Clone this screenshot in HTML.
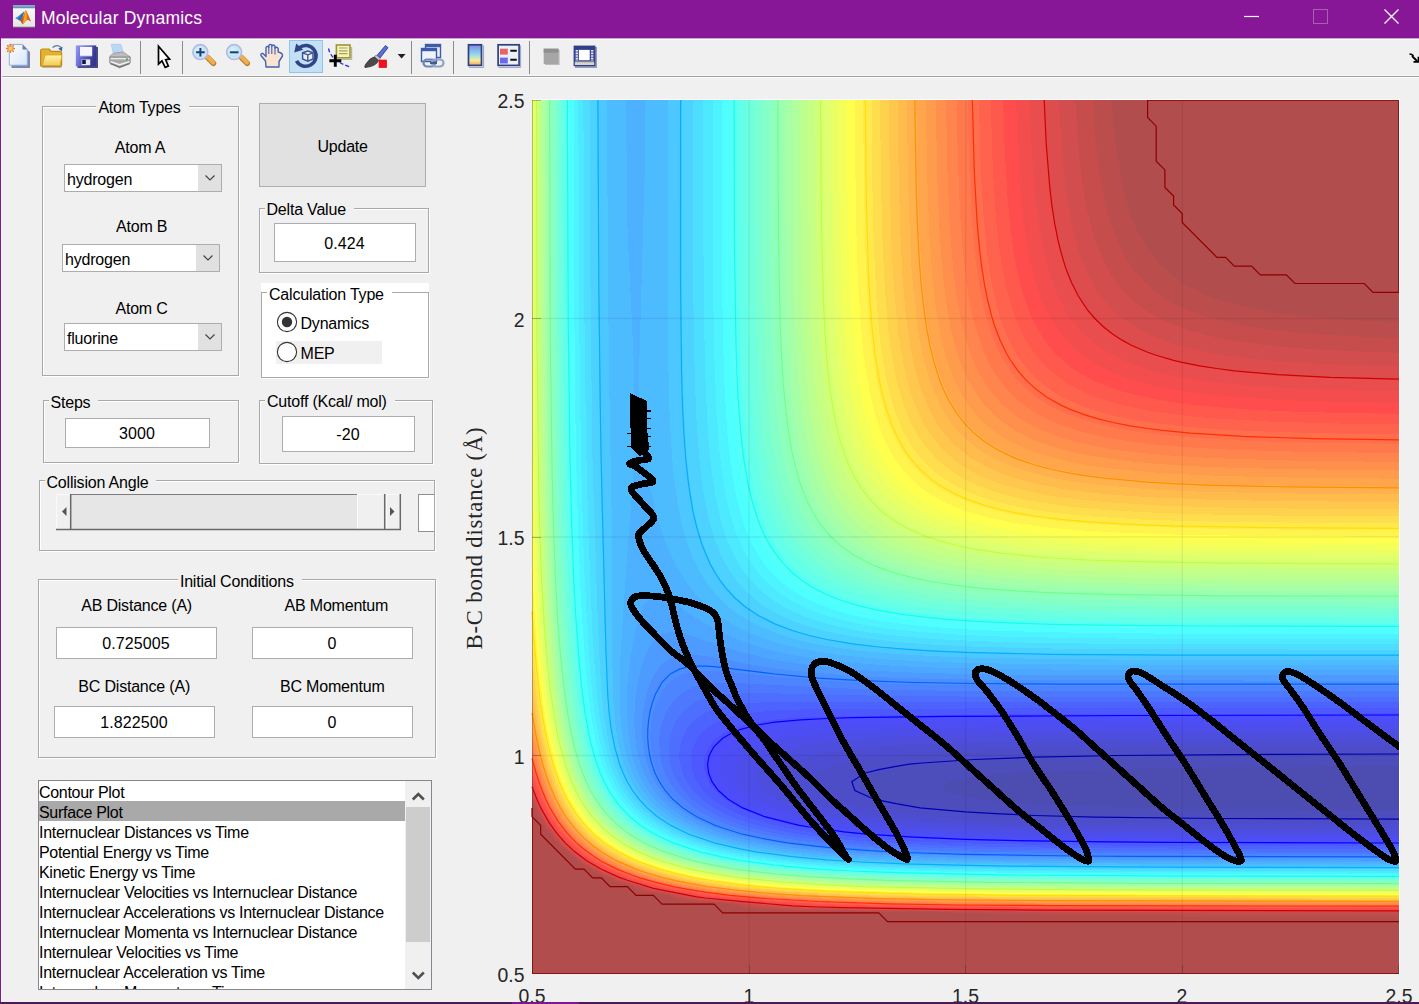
<!DOCTYPE html>
<html><head><meta charset="utf-8"><title>Molecular Dynamics</title>
<style>
html,body{margin:0;padding:0;}
body{width:1419px;height:1004px;overflow:hidden;background:#f0f0f0;font-family:"Liberation Sans",Arial,sans-serif;color:#000;position:relative;}
.abs{position:absolute;}
#titlebar{left:0;top:0;width:1419px;height:38px;background:#881798;border-bottom:1px solid #cfa2d6;}
#title{left:41px;top:8px;font-size:17.5px;letter-spacing:0.2px;line-height:20px;color:#fff;white-space:nowrap;}
#toolbar{left:1px;top:39px;width:1418px;height:37px;background:#f0f0f0;border-top:1px solid #fdfdfd;box-sizing:border-box;border-bottom:none;}#tbline{left:1px;top:75px;width:1418px;height:3px;background:#a0a0a0;border-top:1px solid #f7f7f7;border-bottom:1px solid #fff;box-sizing:border-box;}#leftw{left:1px;top:39px;width:1px;height:963px;background:#f8fcf8;}
#leftb{left:0;top:38px;width:1px;height:966px;background:#881798;}
#botb{left:0;top:1002px;width:1419px;height:2px;background:#4b1a55;}
.panel{border:1px solid #a9a9a9;box-shadow:1px 1px 0 #fff, inset 1px 1px 0 #fff;box-sizing:border-box;}
.ptitle{background:#f0f0f0;font-size:16px;letter-spacing:-0.2px;white-space:nowrap;padding:0 8px 0 2px;line-height:18px;}
.lbl{font-size:16px;letter-spacing:-0.2px;white-space:nowrap;line-height:18px;text-align:center;}
.edit{background:#fff;border:1px solid #abadb3;box-sizing:border-box;font-size:16px;text-align:center;}
.combo{background:#fff;border:1px solid #adadad;box-sizing:border-box;font-size:16px;}
.tick{font-size:17.5px;color:#262626;white-space:nowrap;line-height:18px;}
</style></head><body>
<div id="titlebar" class="abs"></div>
<div id="title" class="abs">Molecular Dynamics</div>
<div id="toolbar" class="abs"></div><div id="tbline" class="abs"></div>
<div id="leftw" class="abs"></div><div id="leftb" class="abs"></div>
<svg class="abs" style="left:0;top:0" width="1419" height="80" viewBox="0 0 1419 80">
<defs>
<linearGradient id="gpage" x1="0" y1="0" x2="1" y2="1"><stop offset="0" stop-color="#fff"/><stop offset="1" stop-color="#d6e4f7"/></linearGradient>
<linearGradient id="gfold" x1="0" y1="0" x2="0" y2="1"><stop offset="0" stop-color="#fff4a8"/><stop offset="1" stop-color="#f3cc55"/></linearGradient>
<linearGradient id="gsave" x1="0" y1="0" x2="1" y2="0.3"><stop offset="0" stop-color="#9a9cf4"/><stop offset="0.5" stop-color="#5a5cc8"/><stop offset="1" stop-color="#34368f"/></linearGradient>
<linearGradient id="gcb" x1="0" y1="0" x2="0" y2="1"><stop offset="0" stop-color="#7f86e6"/><stop offset="0.45" stop-color="#8fd8ee"/><stop offset="0.75" stop-color="#f4ee9a"/><stop offset="1" stop-color="#f2a65a"/></linearGradient>
<radialGradient id="gglass" cx="0.4" cy="0.4" r="0.7"><stop offset="0" stop-color="#d9f3f7"/><stop offset="0.6" stop-color="#bfe6f0"/><stop offset="1" stop-color="#e8ecfb"/></radialGradient>
</defs>
<!-- matlab logo in title -->
<defs><linearGradient id="gml" x1="0" y1="0" x2="0" y2="1"><stop offset="0" stop-color="#fbfbfb"/><stop offset="1" stop-color="#e4e4e4"/></linearGradient>
<linearGradient id="gor" x1="0" y1="0" x2="1" y2="0"><stop offset="0" stop-color="#b3341a"/><stop offset="0.45" stop-color="#f08a1e"/><stop offset="1" stop-color="#c8401c"/></linearGradient></defs>
<rect x="13" y="5" width="22" height="22" fill="url(#gml)"/>
<rect x="13" y="5" width="22" height="2.6" fill="#74aad8"/>
<rect x="13" y="7.4" width="22" height="0.8" fill="#4a607a"/>
<path d="M13,27H35" stroke="#8d9a8d" stroke-width="0.8"/>
<path d="M15.2,18.2 L22.5,13.2 L24.3,11.5 L22,18.5 L20.3,20.8Z" fill="#3f8fcf"/>
<path d="M21,14.2 L24.3,11.3 L22.3,18 L20.3,20.8 L18,19.6Z" fill="#2f6fae"/>
<path d="M20.3,20.8 C22.5,18.5 24.3,12.5 25.8,10.1 C27.5,12 29.3,18.5 31.2,21.7 C29.5,20.3 28.3,19.8 27.3,20 C25.5,21 24.2,23.4 22.4,24.4 C21.8,23 21.2,21.8 20.3,20.8Z" fill="url(#gor)"/>
<path d="M25.8,10.1 C26.6,13 26.8,17 26.4,20.3 C25,21.2 23.8,23 22.4,24.4 C24,20 25,14 25.8,10.1Z" fill="#f6b21f" opacity="0.85"/>
<!-- window buttons -->
<path d="M1244,16.5H1259" stroke="#fff" stroke-width="1.2"/>
<rect x="1313.5" y="9.5" width="14" height="14" fill="none" stroke="#a461b0" stroke-width="1"/>
<path d="M1384.5,9.5 L1398.5,23.5 M1398.5,9.5 L1384.5,23.5" stroke="#fff" stroke-width="1.4"/>
<!-- separators -->
<path d="M140.5,41V74 M182.5,41V74 M411.5,41V74 M453.5,41V74 M529.5,41V74" stroke="#8c8c8c" stroke-width="1"/>
<!-- new -->
<path d="M11.5,47 H24 L30,52 V68 H11.5Z" fill="#7f86aa"/>
<path d="M9.3,44.4 H22.5 L27.3,49.4 V65.2 H9.3Z" fill="url(#gpage)" stroke="#8fb0e2" stroke-width="1"/>
<path d="M22.5,44.4 V49.4 H27.3Z" fill="#6f78b8"/>
<g stroke="#e2733c" stroke-width="1.3"><path d="M10.5,44V53 M6,48.5H15 M7.2,45.2L13.8,51.8 M13.8,45.2L7.2,51.8"/></g>
<rect x="7.6" y="45.6" width="5.8" height="5.8" rx="1.2" fill="#ee9a5c"/>
<rect x="8.8" y="46.8" width="3.4" height="3.4" fill="#f3d25a"/>
<!-- open -->
<path d="M42.5,67.2H61.5" stroke="#9aa0b8" stroke-width="1.6" opacity="0.7"/>
<path d="M40.6,65 V51 q0,-2 2,-2 h6.5 l2,2.3 h8.5 q2,0 2,2 V65 q0,1.4 -1.4,1.4 H42 q-1.4,0 -1.4,-1.4Z" fill="#e4b030" stroke="#c08a18" stroke-width="1.2"/>
<path d="M42.3,65.5 L44.8,56.3 q0.4,-1.3 1.8,-1.3 H60.8 q1.3,0 1,1.3 L60,65.5Z" fill="url(#gfold)" stroke="#d9a62a" stroke-width="0.8"/>
<path d="M52.6,47.6 q4,-3.6 8,-0.6" fill="none" stroke="#5f7398" stroke-width="1.3"/>
<path d="M62.5,46.6 L61.8,51.4 L58.3,48.4Z" fill="#3f5f9a"/>
<!-- save -->
<path d="M77.5,47 H98 V68 H77.5Z" fill="#4a4a82"/>
<path d="M75.8,45.4 H96.3 V66.3 H75.8Z" fill="url(#gsave)"/>
<rect x="80" y="46.8" width="12.2" height="9.2" fill="#f4f6fc"/>
<path d="M80,56H92.2" stroke="#b9bee6" stroke-width="0.8"/>
<rect x="81.6" y="59.4" width="8.6" height="5.8" fill="#e6e8f4"/>
<rect x="82.2" y="59.8" width="3.6" height="4.2" fill="#15173a"/>
<!-- print -->
<path d="M111.2,44.3 H121 L123.2,52 L113.3,53.5Z" fill="#b9d7f7" stroke="#a9bfe0" stroke-width="0.6"/>
<path d="M113.5,53.3 L123.2,52 L130.3,57 L129.5,57.8 H110.5 L109.8,56.2Z" fill="#bdbdbd" stroke="#8f8f8f" stroke-width="0.7"/>
<path d="M109.8,57 H130.2 V63 L119.6,67.8 L109.8,63Z" fill="#a8a8a8" stroke="#7e7e7e" stroke-width="0.8"/>
<path d="M110.5,58.6 H129.5" stroke="#e9e9e9" stroke-width="1.5"/>
<path d="M110.5,61.6 L119.6,64.8 L129.5,61.6" stroke="#f4f4f4" stroke-width="1.5" fill="none"/>
<path d="M110.5,63.6 L119.6,67.2 L129.5,63.6" stroke="#6e6e6e" stroke-width="1.2" fill="none"/>
<rect x="126.2" y="58.2" width="1.6" height="2.4" fill="#3fae49"/>
<!-- pointer -->
<path d="M158.5,46.3 V64 L162,60.9 L165.2,67.3 L168.3,66 L165.6,59.6 L169.6,59.1Z" fill="#fff" stroke="#000" stroke-width="1.7" stroke-linejoin="miter"/>
<!-- zoom in -->
<path d="M207.6,57.4 L213.4,63.2" stroke="#b67c2c" stroke-width="5.6" stroke-linecap="round"/>
<path d="M207.2,56.6 L213.2,62.6" stroke="#efae50" stroke-width="4.2" stroke-linecap="round"/>
<circle cx="200.3" cy="52.1" r="7.4" fill="url(#gglass)" stroke="#b3bbe6" stroke-width="1.7"/>
<path d="M196.1,52.3H204.7 M200.4,48V56.6" stroke="#1f3a80" stroke-width="2"/>
<!-- zoom out -->
<path d="M241.4,57.4 L247.2,63.2" stroke="#b67c2c" stroke-width="5.6" stroke-linecap="round"/>
<path d="M241,56.6 L247,62.6" stroke="#efae50" stroke-width="4.2" stroke-linecap="round"/>
<circle cx="234.1" cy="52.1" r="7.4" fill="url(#gglass)" stroke="#b3bbe6" stroke-width="1.7"/>
<path d="M229.9,52.3H238.5" stroke="#1f3a80" stroke-width="2"/>
<!-- hand -->
<path d="M266,67 L265.5,61 L261,55.5 Q260.5,53 263,53.5 L266,56.5 V47.5 Q267.2,45.3 268.8,47.5 V45.5 Q270.2,43.2 271.8,45.5 V46 Q273.4,44 275,46.2 V48 Q276.8,46.2 278.2,48.5 V52 Q283,53 282.5,56 L279,61.5 V67Z" fill="#fbe3cf" stroke="#3f63b8" stroke-width="1.4" stroke-linejoin="round"/>
<path d="M268.8,47.5V54 M271.8,46V54 M275,47V54.5" stroke="#3f63b8" stroke-width="1.1"/>
<!-- rotate (selected) -->
<rect x="289.5" y="40.5" width="33" height="32" fill="#c5dff5" stroke="#8fc5f0"/>
<path d="M299.3,47.6 A10.4,10.4 0 1 1 296.5,60.8" fill="none" stroke="#2d4786" stroke-width="3.6"/>
<path d="M294.2,52.6 L296.2,43.6 L303.2,49.8Z" fill="#2d4786"/>
<path d="M302.6,52.8 L307.8,51 L313,52.8 V59 L307.8,61.2 L302.6,59Z" fill="#eef2fa" stroke="#3f5496" stroke-width="1.5"/>
<path d="M302.6,52.8 L307.8,54.8 L313,52.8 M307.8,54.8 V61.2" fill="none" stroke="#3f5496" stroke-width="1.4"/>
<!-- data cursor -->
<rect x="336.4" y="45" width="13.6" height="12.8" fill="#f6f3b8" stroke="#9a9440" stroke-width="1.6"/>
<path d="M351.6,47V59.4H338.5" stroke="#bdb98a" stroke-width="1.2" fill="none"/>
<path d="M339,48H347.5 M339,50.8H347.5 M339,53.6H347.5" stroke="#a8a468" stroke-width="1.2"/>
<path d="M328.5,48.5 Q331,61 350.5,67" fill="none" stroke="#1f2fe0" stroke-width="1.3" stroke-dasharray="4,2.2"/>
<path d="M335.3,54.8V66.8 M329.4,60.8H341.3" stroke="#000" stroke-width="2.9"/>
<!-- brush -->
<path d="M377,55.5 L385.5,45.5 L388,47.7 L380,58Z" fill="#5f6fd0" stroke="#2f3a9a" stroke-width="0.9"/>
<path d="M376,55 L380.5,58.7 L378.3,61 L374,57.5Z" fill="#c9c9d2" stroke="#777" stroke-width="0.7"/>
<path d="M374.5,57 L378.5,60.6 Q376,66.5 365,67.5 Q364,66 367.5,62 Q370,58 374.5,57Z" fill="#4b4b4b" stroke="#2a2a2a" stroke-width="0.8"/>
<rect x="378.7" y="59.7" width="8.2" height="8.2" fill="#f0101e"/>
<path d="M397.6,54 H405.6 L401.6,58.5Z" fill="#222"/>
<!-- link -->
<rect x="425.5" y="44.5" width="15" height="13" fill="#e9effa" stroke="#3e5da8" stroke-width="1.4"/>
<path d="M425.5,46H440.5" stroke="#3e5da8" stroke-width="2.4"/>
<rect x="421.5" y="48.5" width="15" height="13" fill="#eef3fc" stroke="#3e5da8" stroke-width="1.4"/>
<path d="M421.5,50H436.5" stroke="#3e5da8" stroke-width="2.4"/>
<rect x="423.5" y="59.5" width="11.5" height="7" rx="3.5" fill="none" stroke="#6f87b5" stroke-width="2.2"/>
<rect x="432" y="59.5" width="11.5" height="7" rx="3.5" fill="none" stroke="#8fa3c8" stroke-width="2.2"/>
<path d="M430,63H437" stroke="#3b5487" stroke-width="1.8"/>
<!-- colorbar -->
<rect x="468.5" y="44.8" width="13" height="20.6" fill="url(#gcb)" stroke="#2f3f7f" stroke-width="1.7"/>
<path d="M469,67.5H483.5 M483.5,45.5V67.5" stroke="#8f98c4" stroke-width="1.2" opacity="0.8"/>
<!-- legend -->
<rect x="498.1" y="44.8" width="21" height="20.6" fill="#eef0f8" stroke="#2f3f7f" stroke-width="1.7"/>
<path d="M498.5,67.5H520.5 M520.5,45.5V67.5" stroke="#8f98c4" stroke-width="1.2" opacity="0.8"/>
<rect x="500" y="48.7" width="7.8" height="5.9" fill="#e86464"/>
<rect x="500" y="57.6" width="7.8" height="5.9" fill="#6a6ae8"/>
<path d="M510.3,50.8H516.8 M510.3,59.8H516.8" stroke="#111" stroke-width="2"/>
<!-- hide plot tools -->
<rect x="545" y="50" width="14.6" height="15" fill="#8e8e8e" opacity="0.55"/>
<rect x="543.7" y="48.7" width="14.8" height="15.3" fill="#a6a6a6"/>
<rect x="543.7" y="48.7" width="14.8" height="4" fill="#8f8f8f"/>
<!-- show plot tools -->
<rect x="575" y="47" width="22" height="21" fill="#7f88ad" opacity="0.8"/>
<rect x="573.6" y="45.6" width="21.8" height="20.6" fill="#2f3f8a"/>
<rect x="574.6" y="49.6" width="19.8" height="11.4" fill="#3f4f9a"/>
<path d="M576.8,50V61 M592.2,50V61" stroke="#e9ecf6" stroke-width="2.2" stroke-dasharray="1.6,1"/>
<rect x="578.9" y="49.9" width="10.8" height="10.3" fill="#fff"/>
<rect x="574.8" y="61.6" width="19.4" height="3.4" fill="#d9d6c9"/>
<path d="M575,62.2H594" stroke="#a9a79a" stroke-width="1" stroke-dasharray="1.2,1"/>
<!-- right chevron -->
<g transform="translate(3.5,0.5)"><path d="M1408.5,55.5 L1413.5,60.5 M1410,61.3 H1415 V56.3" stroke="#000" stroke-width="1.8" fill="none"/>
<path d="M1406,53.5 q2.5,0 4,2" stroke="#000" stroke-width="1.6" fill="none"/></g>
</svg>

<div class="abs panel" style="left:42px;top:106px;width:197px;height:270px;"></div>
<div class="abs" style="left:-7.5px;width:300px;top:99.0px;text-align:center;"><span class="ptitle" style="background:#f0f0f0;display:inline-block">Atom Types</span></div>
<div class="abs lbl" style="left:-10px;width:300px;top:139.0px;font-size:16px;line-height:18.0px;color:#000;">Atom A</div>
<div class="abs combo" style="left:64px;top:164px;width:158px;height:28px;"></div>
<div class="abs" style="left:198px;top:165px;width:23px;height:26px;background:#e1e1e1;"></div>
<svg class="abs" style="left:203.5px;top:174.0px" width="12" height="8"><path d="M1.5,1.5 L6,6 L10.5,1.5" fill="none" stroke="#444" stroke-width="1.2"/></svg>
<div class="abs lbl" style="left:67px;top:171.0px;text-align:left;font-size:16px;line-height:18.0px;color:#000;">hydrogen</div>
<div class="abs lbl" style="left:-8.400000000000006px;width:300px;top:218.0px;font-size:16px;line-height:18.0px;color:#000;">Atom B</div>
<div class="abs combo" style="left:62px;top:244px;width:158px;height:28px;"></div>
<div class="abs" style="left:196px;top:245px;width:23px;height:26px;background:#e1e1e1;"></div>
<svg class="abs" style="left:201.5px;top:254.0px" width="12" height="8"><path d="M1.5,1.5 L6,6 L10.5,1.5" fill="none" stroke="#444" stroke-width="1.2"/></svg>
<div class="abs lbl" style="left:65px;top:251.0px;text-align:left;font-size:16px;line-height:18.0px;color:#000;">hydrogen</div>
<div class="abs lbl" style="left:-8.5px;width:300px;top:300.0px;font-size:16px;line-height:18.0px;color:#000;">Atom C</div>
<div class="abs combo" style="left:64px;top:323px;width:158px;height:28px;"></div>
<div class="abs" style="left:198px;top:324px;width:23px;height:26px;background:#e1e1e1;"></div>
<svg class="abs" style="left:203.5px;top:333.0px" width="12" height="8"><path d="M1.5,1.5 L6,6 L10.5,1.5" fill="none" stroke="#444" stroke-width="1.2"/></svg>
<div class="abs lbl" style="left:67px;top:330.0px;text-align:left;font-size:16px;line-height:18.0px;color:#000;">fluorine</div>
<div class="abs" style="left:259px;top:103px;width:167px;height:84px;background:#e1e1e1;border:1px solid #adadad;box-sizing:border-box"></div>
<div class="abs lbl" style="left:192.60000000000002px;width:300px;top:138.0px;font-size:16px;line-height:18.0px;color:#000;">Update</div>
<div class="abs panel" style="left:259px;top:208px;width:170px;height:65px;"></div>
<div class="abs ptitle" style="left:264.5px;top:201.0px;background:#f0f0f0">Delta Value</div>
<div class="abs edit" style="left:274px;top:223px;width:142px;height:39px;"></div>
<div class="abs lbl" style="left:194.5px;width:300px;top:235.0px;font-size:16px;line-height:18.0px;color:#000;letter-spacing:0.12px;">0.424</div>
<div class="abs" style="left:261px;top:283px;width:168px;height:95px;background:#fff"></div>
<div class="abs panel" style="left:261px;top:292px;width:168px;height:86px;background:#fff;"></div>
<div class="abs ptitle" style="left:267px;top:286.0px;background:#fff">Calculation Type</div>
<div class="abs" style="left:276px;top:341px;width:106px;height:23px;background:#f0f0f0"></div>
<svg class="abs" style="left:275.9px;top:311.2px" width="22" height="22"><circle cx="11" cy="11" r="9.6" fill="#fff" stroke="#333" stroke-width="1.1"/><circle cx="11" cy="11" r="5.2" fill="#333"/></svg>
<div class="abs lbl" style="left:300.5px;top:315.0px;text-align:left;font-size:16px;line-height:18.0px;color:#000;">Dynamics</div>
<svg class="abs" style="left:275.9px;top:341.1px" width="22" height="22"><circle cx="11" cy="11" r="9.6" fill="#fff" stroke="#333" stroke-width="1.1"/></svg>
<div class="abs lbl" style="left:300.5px;top:345.0px;text-align:left;font-size:16px;line-height:18.0px;color:#000;">MEP</div>
<div class="abs panel" style="left:43px;top:400px;width:196px;height:63px;"></div>
<div class="abs ptitle" style="left:48.5px;top:394.0px;background:#f0f0f0">Steps</div>
<div class="abs edit" style="left:65px;top:418px;width:145px;height:30px;"></div>
<div class="abs lbl" style="left:-13.0px;width:300px;top:425.0px;font-size:16px;line-height:18.0px;color:#000;letter-spacing:0.12px;">3000</div>
<div class="abs panel" style="left:259px;top:400px;width:174px;height:64px;"></div>
<div class="abs ptitle" style="left:265px;top:393.0px;background:#f0f0f0">Cutoff (Kcal/ mol)</div>
<div class="abs edit" style="left:282px;top:416px;width:133px;height:36px;"></div>
<div class="abs lbl" style="left:198.0px;width:300px;top:426.0px;font-size:16px;line-height:18.0px;color:#000;letter-spacing:0.12px;">-20</div>
<div class="abs panel" style="left:39px;top:480px;width:396px;height:71px;"></div>
<div class="abs ptitle" style="left:44.5px;top:474.0px;background:#f0f0f0">Collision Angle</div>
<svg class="abs" style="left:50px;top:490px" width="390" height="46" viewBox="50 490 390 46">
<rect x="56" y="494" width="345" height="36" fill="#e6e6e6"/>
<path d="M71,494.5H357" stroke="#7d7d7d" stroke-width="1"/>
<rect x="56" y="494" width="15" height="35" fill="#f0f0f0"/>
<rect x="357" y="494" width="44" height="35" fill="#f0f0f0"/>
<path d="M56.5,529V494.5H70 M357.5,529V494.5H384 M386.5,529V494.5H400" stroke="#fafafa" stroke-width="1" fill="none"/>
<path d="M56,529.5H401" stroke="#696969" stroke-width="1.6"/>
<path d="M70.7,494V530 M384.7,494V530 M400.3,494V530" stroke="#696969" stroke-width="1.5"/>
<path d="M66.5,507 L62,511.5 L66.5,516Z M390,507 L394.5,511.5 L390,516Z" fill="#555"/>
<rect x="418.5" y="494.5" width="16" height="37" fill="#fff" stroke="#8f8f8f" stroke-width="1"/>
</svg>
<div class="abs" style="left:434px;top:490px;width:8px;height:46px;background:#f0f0f0"></div>
<div class="abs" style="left:434px;top:481px;width:1px;height:70px;background:#a9a9a9"></div><div class="abs" style="left:435px;top:481px;width:1px;height:71px;background:#fff"></div>
<div class="abs panel" style="left:38px;top:579px;width:398px;height:179px;"></div>
<div class="abs" style="left:89.80000000000001px;width:300px;top:573.0px;text-align:center;"><span class="ptitle" style="background:#f0f0f0;display:inline-block">Initial Conditions</span></div>
<div class="abs lbl" style="left:-13.400000000000006px;width:300px;top:597.0px;font-size:16px;line-height:18.0px;color:#000;">AB Distance (A)</div>
<div class="abs lbl" style="left:186.39999999999998px;width:300px;top:597.0px;font-size:16px;line-height:18.0px;color:#000;">AB Momentum</div>
<div class="abs edit" style="left:56px;top:627px;width:161px;height:32px;"></div>
<div class="abs lbl" style="left:-14.0px;width:300px;top:635.0px;font-size:16px;line-height:18.0px;color:#000;letter-spacing:0.12px;">0.725005</div>
<div class="abs edit" style="left:252px;top:627px;width:161px;height:32px;"></div>
<div class="abs lbl" style="left:182.0px;width:300px;top:635.0px;font-size:16px;line-height:18.0px;color:#000;letter-spacing:0.12px;">0</div>
<div class="abs lbl" style="left:-15.800000000000011px;width:300px;top:678.0px;font-size:16px;line-height:18.0px;color:#000;">BC Distance (A)</div>
<div class="abs lbl" style="left:182.3px;width:300px;top:678.0px;font-size:16px;line-height:18.0px;color:#000;">BC Momentum</div>
<div class="abs edit" style="left:54px;top:706px;width:161px;height:32px;"></div>
<div class="abs lbl" style="left:-16.0px;width:300px;top:714.0px;font-size:16px;line-height:18.0px;color:#000;letter-spacing:0.12px;">1.822500</div>
<div class="abs edit" style="left:252px;top:706px;width:161px;height:32px;"></div>
<div class="abs lbl" style="left:182.0px;width:300px;top:714.0px;font-size:16px;line-height:18.0px;color:#000;letter-spacing:0.12px;">0</div>
<div class="abs" style="left:38px;top:780px;width:394px;height:210px;background:#fff;border:1px solid #828790;box-sizing:border-box;overflow:hidden"></div>
<div class="abs" style="left:39px;top:801px;width:366px;height:20px;background:#a9a9a9"></div>
<div class="abs" style="left:39px;top:781px;width:366px;height:208px;overflow:hidden">
<div class="abs lbl" style="left:0px;top:3.0px;text-align:left;letter-spacing:-0.3px">Contour Plot</div>
<div class="abs lbl" style="left:0px;top:23.0px;text-align:left;letter-spacing:-0.3px">Surface Plot</div>
<div class="abs lbl" style="left:0px;top:43.0px;text-align:left;letter-spacing:-0.3px">Internuclear Distances vs Time</div>
<div class="abs lbl" style="left:0px;top:63.0px;text-align:left;letter-spacing:-0.3px">Potential Energy vs Time</div>
<div class="abs lbl" style="left:0px;top:83.0px;text-align:left;letter-spacing:-0.3px">Kinetic Energy vs Time</div>
<div class="abs lbl" style="left:0px;top:103.0px;text-align:left;letter-spacing:-0.3px">Internuclear Velocities vs Internuclear Distance</div>
<div class="abs lbl" style="left:0px;top:123.0px;text-align:left;letter-spacing:-0.3px">Internuclear Accelerations vs Internuclear Distance</div>
<div class="abs lbl" style="left:0px;top:143.0px;text-align:left;letter-spacing:-0.3px">Internuclear Momenta vs Internuclear Distance</div>
<div class="abs lbl" style="left:0px;top:163.0px;text-align:left;letter-spacing:-0.3px">Internulear Velocities vs Time</div>
<div class="abs lbl" style="left:0px;top:183.0px;text-align:left;letter-spacing:-0.3px">Internuclear Acceleration vs Time</div>
<div class="abs lbl" style="left:0px;top:203.0px;text-align:left;letter-spacing:-0.3px">Internuclear Momenta vs Time</div>
</div>
<div class="abs" style="left:405px;top:781px;width:26px;height:208px;background:#f0f0f0"></div>
<div class="abs" style="left:406px;top:807px;width:24px;height:135px;background:#cdcdcd"></div>
<svg class="abs" style="left:410px;top:788px" width="16" height="14"><path d="M2.8,11.5 L8.3,6 L13.8,11.5" fill="none" stroke="#505050" stroke-width="2.6"/></svg>
<svg class="abs" style="left:410px;top:968px" width="16" height="14"><path d="M2.8,4.5 L8.3,10 L13.8,4.5" fill="none" stroke="#505050" stroke-width="2.6"/></svg>
<svg class="abs" style="left:0;top:0" width="1419" height="1004" viewBox="0 0 1419 1004">
<rect x="532" y="99" width="868" height="875" fill="#fff"/>
<g shape-rendering="crispEdges"><rect x="532" y="100" width="867" height="874" fill="#4d4db1"/>
<path fill="#4d4dbc" d="M532,974 1399,974 1399,810.1 1190.9,808.9 1124,807.9 1086.9,806.6 1026.2,803.3 976.1,799.2 942,790.5 947.4,781.7 965.5,778.4 982.8,775.8 1007.6,773 1017.5,772.4 1078.2,769.9 1156.2,768.1 1260.3,766.8 1399,766.1 1399,100 532,100Z"/>
<path fill="#4d4dc7" d="M532,974 1399,974 1399,818.4 1234.3,817.8 1115.2,816.7 1034.9,814.3 1000.2,812.7 965.5,810.6 932.1,807.9 904.8,803.5 882.4,799.2 862.3,790.5 859.8,781.7 870.1,775.6 875.5,773 896.1,768.7 927,764.2 956.8,762.1 982.8,760.7 1043.5,758.5 1130.2,756.8 1251.6,755.7 1399,755.2 1399,100 532,100Z"/>
<path fill="#4d4dd2" d="M532,974 1399,974 1399,824.5 1216.9,823.8 1095.6,822.4 1008.8,820.2 974.2,818.8 935.8,816.7 904.8,813.4 870.1,808.7 865.1,807.9 844.1,802.4 833.1,799.2 817.4,790.5 812.7,781.7 818,773 826.8,768.6 837.8,764.2 852.8,761 878.8,756.9 896.1,755.1 922.2,753.2 956.8,751.5 991.5,750.2 1078.2,748.4 1208.3,747.2 1399,746.6 1399,100 532,100Z"/>
<path fill="#4d4dde" d="M532,974 1399,974 1399,829.2 1199.6,828.6 1069.5,827.3 989.8,825.4 956.8,823.8 922.2,821.5 896.1,819.4 870.1,816.7 844.1,812.1 824.3,807.9 799.8,799.2 786.5,790.5 780.8,781.7 781.8,773 783.4,771.2 791,764.2 800.8,759.9 813.8,755.5 826.8,752.8 852.8,748.9 878.8,746.4 913.5,744.3 948.2,743 1043.5,740.9 1182.2,739.7 1399,739 1399,100 532,100Z"/>
<path fill="#4d4de9" d="M532,974 1399,974 1399,833.6 1199.6,833 1069.5,831.7 974.2,829.2 930.8,827.3 896.1,825.1 861.5,821.2 829.8,816.7 795.2,807.9 774.9,799.2 762.9,790.5 756.8,781.7 755.7,773 760,764.2 766.1,759.2 771.6,755.5 774.8,754.1 783.4,750.8 792.1,748.1 797.1,746.8 809.4,744.4 826.8,741.9 844.1,740.1 870.1,738 904.8,736.4 939.5,735.3 1034.9,733.7 1182.2,732.6 1399,732.1 1399,100 532,100Z"/>
<path fill="#4d4df4" d="M532,974 1399,974 1399,837.2 1156.2,836.5 1017.5,834.8 974.2,833.6 930.8,831.6 896.1,829.4 861.5,826.5 851.4,825.4 835.5,823 800.8,816.7 772.6,807.9 755,799.2 744.1,790.5 737.8,781.7 735.4,773 736.9,764.2 740.1,759.3 743,755.5 748.8,751.2 757.4,746.2 766.1,743 774.8,740.4 784.7,738 809.4,734.4 835.5,732 861.5,730.4 896.1,729 991.5,727.3 1147.6,726.2 1399,725.6 1399,100 532,100Z"/>
<path fill="#4d4dff" d="M532,974 1399,974 1399,840.6 1156.2,839.9 1017.5,838.2 956.8,836.5 904.8,834.3 870.1,831.5 844.1,828.8 818.2,825.4 792.1,820 778.3,816.7 754.2,807.9 738.6,799.2 728.3,790.5 721.9,781.7 718.9,773 718.7,764.2 721.7,755.5 729,746.8 740.1,739.6 743.3,738 757.4,733.2 774.8,729.3 792.1,727 818.1,724.8 844.1,723.4 878.8,722.3 982.8,720.7 1147.6,719.8 1399,719.4 1399,100 532,100Z"/>
<path fill="#4d58ff" d="M532,974 1399,974 1399,843.8 1156.2,843.2 1034.9,841.9 982.8,840.7 930.8,838.9 887.5,836.5 852.8,833.9 818.1,829.5 792.1,825.2 759.9,816.7 738.7,807.9 724.5,799.2 714.8,790.5 708.6,781.7 705.4,774.2 704.9,773 703.7,764.2 704.9,755.5 708.9,746.8 714.1,740.5 716.7,738 722.7,733.8 731.4,729.3 740.1,726.2 748.8,723.9 757.4,722.1 774.8,719.6 792.1,718.1 818.1,716.7 844.1,716 930.8,714.8 1121.6,713.9 1399,713.4 1399,100 532,100Z"/>
<path fill="#4d63ff" d="M532,974 1399,974 1399,846.5 1138.9,845.8 1060.9,845.1 991.5,844 947.9,842.9 904.8,840.9 861.5,837.9 822.7,834.2 800.8,830.7 773.2,825.4 744.4,816.7 725.4,807.9 712.3,799.2 703.2,790.5 696.9,781.7 693,773 691.1,764.2 691.1,755.5 693,746.8 697.3,738 705.1,729.3 714.1,723.3 722.7,719.4 731.4,716.6 740.1,714.6 757.4,712 774.8,710.5 809.4,709.2 861.5,708.7 1399,707.7 1399,100 532,100Z"/>
<path fill="#4d6eff" d="M532,974 1399,974 1399,849.2 1130.2,848.4 1052.2,847.7 982.8,846.5 930.8,845 884.4,842.9 844.1,839.6 809.4,835.7 797.8,834.2 783.4,831.4 756.4,825.4 730.9,816.7 713.7,807.9 701.6,799.2 692.8,790.5 686.6,781.7 682.6,773 680.1,764.2 679.2,755.5 679.9,746.8 682.3,738 686.6,729.3 688.1,727.2 694.1,720.5 696.7,718.3 705.4,712.8 714.1,709.2 722.7,706.8 731.4,705 748.8,703 774.8,701.8 800.8,701.6 991.5,702.5 1399,702.1 1399,100 532,100Z"/>
<path fill="#4d79ff" d="M532,974 1399,974 1399,851.9 1138.9,851.2 1052.2,850.4 982.8,849.2 922.1,847.3 870.1,844.7 844.1,842.9 800.8,837.7 777.8,834.2 757.4,829.5 742.1,825.4 719.3,816.7 703.3,807.9 691.9,799.2 683.6,790.5 677.5,781.7 673.2,773 670.4,764.2 669.1,755.5 668.9,746.8 669.8,738 670.7,734.3 672.2,729.3 676.3,720.5 679.4,715.8 682.9,711.8 688.1,707.1 696.7,701.7 705.4,698.4 714.1,696.2 722.7,694.8 731.4,693.9 748.8,693.2 766.1,693.2 878.8,695.8 982.8,696.7 1399,696.6 1399,100 532,100Z"/>
<path fill="#4d84ff" d="M532,974 1399,974 1399,854 1130.2,853.4 1043.5,852.7 974.2,851.6 922.1,850 870.1,847.3 826.8,844 800.8,840.9 783.4,838.2 761.1,834.2 731.4,826 708.8,816.7 694,807.9 683.2,799.2 675.2,790.5 669.2,781.7 664.9,773 661.8,764.2 660.1,755.5 659.3,746.8 659.4,738 660.5,729.3 662,722.5 666.2,711.8 671.4,703.1 679.4,694.8 688.1,689.5 696.7,686.3 705.4,684.5 714.1,683.5 722.7,683.1 740.1,683.2 844.1,688.4 896.1,689.9 948.2,690.7 1078.2,691.3 1399,691.2 1399,100 532,100Z"/>
<path fill="#4d8fff" d="M532,974 1399,974 1399,856.2 1121.6,855.6 1034.9,854.8 965.5,853.6 904.8,851.8 870.1,849.9 826.8,846.5 792.1,842.7 766.1,838.2 748.7,834.6 722.7,826.9 714.1,823.5 699.3,816.7 685.5,807.9 675.3,799.2 667.5,790.5 661.6,781.7 657.3,773 654.1,764.2 652,755.5 650.8,746.8 650.4,738 650.6,729.3 651.6,720.5 653.3,711.8 656.2,703.1 662,691 666.3,685.6 670.7,680.9 679.4,675.3 688.1,672.4 696.7,671 705.4,670.6 722.7,671.3 783.4,677.5 826.8,680.8 870.1,683 922.1,684.5 982.8,685.4 1069.5,685.9 1399,685.8 1399,100 532,100Z"/>
<path fill="#4d9bff" d="M532,974 1399,974 1399,858.4 1112.9,857.7 1026.2,856.9 956.8,855.6 904.8,854 857.2,851.6 818.1,848.3 774.9,842.9 757.4,839.5 734.2,834.2 714.1,827.4 705.4,824 690.8,816.7 677.7,807.9 667.9,799.2 660.4,790.5 654.7,781.7 650.4,773 647.1,764.2 644.7,755.5 643.2,746.8 642.3,738 642.1,729.3 642.3,720.5 643.1,711.8 644.7,701.4 646.5,694.3 649.3,685.6 653.4,675.7 658.5,668.1 662,663.8 670.7,657.8 679.4,655.2 688.1,654.5 696.7,655 705.4,656.1 757.4,665.6 774.8,668.3 800.8,671.5 844.1,675.3 896.1,677.9 956.8,679.4 1043.5,680.4 1399,680.6 1399,100 532,100Z"/>
<path fill="#4da6ff" d="M532,974 1399,974 1399,860.6 1112.9,859.9 1017.5,858.9 948.2,857.5 878.8,855 826.8,851.7 792.1,847.8 759.3,842.9 740.1,838.6 723.1,834.2 699.6,825.4 682.9,816.7 670.5,807.9 662,800.1 653.9,790.5 648.4,781.7 643.9,773 640.7,764.2 638.2,755.5 636.3,746.8 635.1,738 634.2,720.5 634.9,703.1 637,685.6 641,668.1 644.7,656.2 647.5,650.6 653.4,640.8 662,634.1 670.7,632.2 679.4,632.9 688.1,635 735.9,650.6 757.4,656.1 772.6,659.4 792.1,662.7 818.1,666.2 844.1,668.7 870.1,670.5 904.8,672.3 939.5,673.4 1026.2,674.9 1147.6,675.4 1399,675.4 1399,100 532,100Z"/>
<path fill="#4db1ff" d="M532,974 1399,974 1399,862.4 1095.6,861.7 1000.2,860.7 939.5,859.4 870.1,856.6 818.1,853.1 802.7,851.6 783.4,849.1 745.8,842.9 731.4,839.3 713.1,834.2 691.4,825.4 675.7,816.7 663.9,807.9 654.9,799.2 647.9,790.5 642.4,781.7 638.1,773 634.7,764.2 632.1,755.5 628.7,738 627,720.5 626.7,703.1 627.4,685.6 629.1,668.1 631.6,650.6 636,627.1 639.8,615.7 644.7,603.4 653.4,595.4 662,596 665.8,598.2 670.7,600.4 692.5,615.7 706.5,624.4 723,633.1 743.9,641.9 766.1,648.8 792.1,654.8 818.1,659 844.1,662.1 878.8,664.9 913.5,666.8 956.8,668.3 1000.2,669.1 1130.2,670.1 1399,670.2 1399,100 532,100Z"/>
<path fill="#4dbcff" d="M532,974 1399,974 1399,864.2 1138.9,863.7 991.5,862.4 939.5,861.4 896.1,860 852.8,857.7 818.1,855.2 783.4,851.6 757.4,847.5 733.9,842.9 705.4,834.6 683.8,825.4 670.7,817.8 657.8,807.9 649.1,799.2 642.3,790.5 636.8,781.7 632.6,773 627.4,758.6 624.4,746.8 621.6,729.3 620.7,720.5 619.7,703.1 619.6,676.8 620.7,650.6 627.4,551.6 632.1,493.3 633.8,458.3 634.5,432.1 634.5,397.2 633.4,353.5 627.4,226.9 626,100 532,100ZM886.5,659.4 922.2,661.4 956.8,662.7 1043.5,664.3 1164.9,665 1399,665 1399,100 645.3,100 644.7,171.6 639.1,370.9 639,397.2 639.4,414.6 641,432.1 642.8,440.9 644.7,446.9 646.5,467.1 649.2,484.6 651.2,493.3 653.4,500.1 655.5,510.8 657.7,519.5 666.9,545.7 674.9,563.2 685.3,580.7 691.8,589.4 699.3,598.2 708.2,606.9 719.1,615.7 732.6,624.4 740.1,628.4 750.1,633.1 766.1,639.2 783.4,644.5 800.8,648.6 818.1,651.8 835.5,654.4 861.5,657.3Z"/>
<path fill="#4dc7ff" d="M532,974 1399,974 1399,866 1138.9,865.5 991.5,864.2 939.5,863.2 887.5,861.6 861,860.4 818.1,857.3 783.4,853.7 767.2,851.6 757.4,850 723.2,842.9 705.4,837.4 695.8,834.2 688.1,830.8 676.8,825.4 670.7,821.8 662.6,816.7 653.4,809.2 643.5,799.2 636.9,790.5 631.7,781.7 627.3,773 624,764.2 621.3,755.5 618.7,745.3 616,729.3 614.1,711.8 613,694.3 612.3,659.4 612.3,545.7 610,431.4 608.6,336 607.7,231.1 607,100 532,100ZM1079.7,659.4 1190.9,659.8 1399,659.9 1399,100 667.9,100 667.6,266.1 668,353.5 669.6,414.6 671.6,449.6 672.9,467.1 674.8,484.6 677.5,502 680.9,519.5 685.4,537 691.6,554.5 695.5,563.2 700,572 705.4,580.7 711.7,589.4 719.3,598.2 728.7,606.9 740.4,615.7 755.5,624.4 766.1,629.2 783.4,635.7 800.8,640.6 818.1,644.4 835.5,647.5 861.5,650.9 887.5,653.3 913.5,655.1 948.2,656.8 982.8,657.9Z"/>
<path fill="#4dd2ff" d="M532,974 1399,974 1399,867.8 1156.2,867.4 1008.9,866.3 956.8,865.4 904.8,864 861.5,862.2 826.8,860.1 792.1,856.8 757.4,852.3 740.1,849.1 713.6,842.9 688.1,834.2 670.7,825.7 656.8,816.7 644.7,806.1 638.4,799.2 632,790.5 626.7,781.7 622.6,773 619.1,764.2 614.2,746.8 610.7,729.3 608.6,711.8 607.2,694.3 605,641.9 601.4,507.1 599.7,423.4 598,283.5 597.1,100 532,100ZM936.8,650.6 1000.2,652.9 1086.9,654.2 1199.6,654.7 1399,654.7 1399,100 681.8,100 681.7,248.6 682.1,327.2 683.2,388.4 685.1,432.1 686.3,449.6 688.8,475.8 691.1,493.3 694.2,510.8 698.3,528.3 700.8,537 707.2,554.5 711.2,563.2 716,572 722.7,582.1 728.5,589.4 736.9,598.2 740.1,601 747.2,606.9 760.5,615.7 774.8,622.9 783.4,626.5 800.8,632.4 809.4,634.8 826.8,638.8 844.1,641.9 861.5,644.4 887.5,647.2 913.5,649.3Z"/>
<path fill="#4ddeff" d="M532,974 1399,974 1399,869.5 1137.2,869.1 1000.2,867.9 939.5,866.8 887.5,865.1 844.1,863 809.4,860.6 774.8,856.8 740.8,851.6 722.7,847.6 704.8,842.9 681.1,834.2 664.1,825.4 651.3,816.7 641.4,807.9 633.6,799.2 627.2,790.5 622.2,781.7 618.7,774.6 614.6,764.2 609.4,746.8 606,729.3 603.5,711.8 601,685.6 599.1,650.6 597,598.2 592.5,458.3 590.6,309.8 589.7,100 532,100ZM895.9,641.9 930.8,644.5 965.5,646.3 1008.9,647.6 1052.2,648.5 1173.6,649.4 1399,649.6 1399,100 693.1,100 693.1,231.1 693.5,309.8 694.6,370.9 696.2,414.6 699.2,458.3 701.1,475.8 703.6,493.3 708.9,519.5 711.3,528.3 717.2,545.7 720.9,554.5 725.2,563.2 730.4,572 736.6,580.7 740.1,584.8 744.2,589.4 753.5,598.2 765.4,606.9 774.8,612.5 783.4,616.9 800.8,623.9 809.4,626.7 826.8,631.3 844.1,635 861.5,637.8Z"/>
<path fill="#4de9ff" d="M532,974 1399,974 1399,871.1 1130.2,870.6 982.8,869.4 930.8,868.3 887.5,866.9 844.1,864.8 809.4,862.3 787.5,860.4 774.8,858.8 740.1,853.5 722.7,850 696.8,842.9 674.6,834.2 658.4,825.4 646.1,816.7 636.5,807.9 627.4,797.1 622.8,790.5 618.7,783.4 613.7,773 610.2,764.2 607.5,755.5 603.2,738 600.1,720.5 597,694.3 594.8,668.1 592.5,633.1 589.9,572 587.8,510.8 586,440.9 584.1,292.3 583.4,100 532,100ZM997.5,641.9 1052.2,643.1 1130.2,644 1399,644.4 1399,100 703.3,100 703.4,239.8 704,318.5 705.4,379.7 707.9,432.1 711.1,467.1 713.5,484.6 716.6,502 720.7,519.5 723.2,528.3 726.1,537 729.6,545.7 733.6,554.5 740.1,565.9 744.1,572 748.8,577.9 757.4,587.4 766.1,595 774.8,601.3 783.9,606.9 792.1,611.1 802.5,615.7 818.1,621.1 835.5,625.9 852.8,629.6 870.1,632.5 887.5,634.8 913.5,637.4 939.5,639.3Z"/>
<path fill="#4df4ff" d="M532,974 1399,974 1399,872.6 1130.2,872.1 982.8,870.9 930.8,869.9 887.5,868.7 844.1,866.5 809.4,864.1 771.2,860.4 740.1,855.5 720.1,851.6 705.4,847.7 689.4,842.9 668.4,834.2 653.4,825.7 641.2,816.7 632,807.9 624.6,799.2 618.5,790.5 613.7,781.7 609.5,773 603.4,755.5 599,738 595.9,720.5 592.7,697.4 590.1,668.1 587.1,624.4 584,564.1 581,458.3 579.2,318.5 578.3,100 532,100ZM934.9,633.1 965.5,635 1000.2,636.5 1078.2,638.2 1190.9,639.1 1399,639.3 1399,100 712.7,100 712.8,222.4 713.3,301 714.5,362.2 716.7,414.6 719.4,449.6 721.4,467.1 723.9,484.6 727.3,502 729.3,510.8 734.5,528.3 737.7,537 741.5,545.7 745.9,554.5 751.2,563.2 757.5,572 765.3,580.7 774.9,589.4 783.4,595.7 792.1,601 800.8,605.6 809.4,609.5 826.4,615.7 835.5,618.3 852.8,622.5 870.1,625.8 887.5,628.4 913.5,631.3Z"/>
<path fill="#4dffff" d="M532,974 1399,974 1399,874.1 1130.2,873.6 982.8,872.4 922.1,871.2 870.1,869.6 835.5,867.7 800.8,865.1 766.1,861.5 740.1,857.5 711.1,851.6 688.1,844.8 679.4,841.6 662.6,834.2 653.4,828.8 647.9,825.4 636.5,816.7 627.5,807.9 618.7,796.8 614.6,790.5 610,782.4 605.7,773 602.3,764.2 599.5,755.5 597.2,746.8 593.3,729.3 590.5,711.8 587.4,685.6 584,648.8 581,598.2 578.7,545.7 577,493.3 575.6,432.1 574.2,301 573.6,100 532,100ZM1098.3,633.1 1208.3,633.9 1399,634.1 1399,100 721.5,100 721.8,239.8 722.7,327.2 724.6,388.4 726,414.6 728.1,440.9 730,458.3 732.4,475.8 735.6,493.3 739.8,510.8 745.4,528.3 748.9,537 753,545.7 757.4,553.6 763.8,563.2 771,572 779.8,580.7 790.8,589.4 805.3,598.2 818.1,604.1 826.8,607.5 844.1,613 861.5,617.2 878.8,620.5 904.8,624.2 922.1,626.1 948.2,628.2 974.2,629.8 1008.8,631.2Z"/>
<path fill="#58fff4" d="M532,974 1399,974 1399,875.6 1130.2,875.1 982.8,873.9 922.2,872.7 870.1,871.1 830.2,869.1 800.8,866.8 766.1,863.2 740.1,859.5 722.7,856.2 705.4,852.3 688.1,847.1 676.1,842.9 670.7,840.6 657.2,834.2 653.4,831.9 643,825.4 636,819.9 632.1,816.7 623.5,807.9 616.4,799.2 610.6,790.5 606,781.7 602,773 598.7,764.2 593.4,746.8 589.7,729.3 585.4,703.1 583.3,685.6 580.2,650.6 577.8,615.7 575.3,572 573.4,519.5 571.9,458.3 570.2,318.5 569.4,100 532,100ZM980.3,624.4 1043.5,626.8 1121.6,628.1 1225.6,628.7 1399,628.9 1399,100 730,100 730.2,222.4 730.9,301 732.3,362.2 735,414.6 738.2,449.6 740.5,467.1 743.5,484.6 747.5,502 750,510.8 756.1,528.3 760,537 764.6,545.7 770,554.5 776.6,563.2 784.7,572 794.7,580.7 807.7,589.4 818.1,595 826.8,598.9 835.5,602.3 852.8,607.8 870.1,612 887.5,615.3 904.8,617.9 930.8,620.8 956.8,623Z"/>
<path fill="#63ffe9" d="M532,974 1399,974 1399,877.1 1130.2,876.6 982.8,875.4 930.8,874.4 878.8,872.9 835.5,870.9 800.8,868.6 766.1,864.9 733.9,860.4 705.4,854.2 695.2,851.6 688.1,849.3 670,842.9 652,834.2 636,823.5 627.8,816.7 619.4,807.9 610,795.3 602.3,781.7 595.2,764.2 592.3,755.5 590,746.8 584.4,720.5 581.8,703.1 578.8,676.8 575.4,639.6 572.8,598.2 570.4,545.7 568.7,493.3 567.6,440.9 566.2,318.5 565.5,100 532,100ZM940.3,615.7 965.5,617.7 1000.2,619.7 1043.5,621.2 1086.9,622.2 1199.6,623.3 1399,623.6 1399,100 738.2,100 738.4,213.6 739.1,292.3 740.5,353.5 742.5,397.2 745.2,432.1 747.2,449.6 749.7,467.1 755,493.3 760,510.8 763.1,519.5 766.8,528.3 771,537 776.1,545.7 783.4,556 789.7,563.2 798.8,572 809.4,580 818.1,585.3 826.8,589.9 844.1,597.1 852.8,600 870.1,604.8 887.5,608.5 904.8,611.4Z"/>
<path fill="#6effde" d="M532,974 1399,974 1399,878.5 1121.6,878.1 982.8,876.9 922.1,875.7 870.1,874 826.8,871.9 788.6,869.1 757.4,865.5 723.9,860.4 705.4,856.2 688.1,851.6 664.4,842.9 647.2,834.2 634.1,825.4 623.9,816.7 618.7,811.3 609,799.2 601.4,786.5 595.1,773 591.8,764.2 589.1,755.5 584,736 579.7,711.8 575.4,679 572.8,650.6 569.7,606.9 566.9,554.5 564.5,467.1 562.8,327.2 562.1,100 532,100ZM1042,615.7 1095.6,616.9 1164.9,617.7 1399,618.3 1399,100 746.2,100 746.5,222.4 747.4,301 749.1,362.2 750.4,388.4 752.2,414.6 756,449.6 758.8,467.1 762.3,484.6 766.1,498.7 770,510.8 774.8,522.5 782.2,537 787.9,545.7 794.8,554.5 803.2,563.2 813.8,572 826.8,580.3 835.5,584.8 846.1,589.4 861.5,594.8 878.8,599.6 896.1,603.2 913.5,606.2 930.8,608.5 956.8,611.1 982.8,613Z"/>
<path fill="#79ffd2" d="M532,974 1399,974 1399,879.8 1121.6,879.3 965.5,878.1 913.5,877 870.1,875.5 826.8,873.3 792.1,870.9 772.7,869.1 757.4,867.2 722.7,861.8 705.4,858.1 681.6,851.6 659,842.9 644.7,835.4 629.9,825.4 620,816.7 610,805.4 605.5,799.2 600.1,790.5 595.6,781.7 591.8,773 585.8,755.5 581.4,738 577.9,720.5 575.4,705.2 571.9,676.8 569.4,650.6 566.7,615.9 564.4,572 562.5,519.5 561,458.3 559.3,318.5 558.6,100 532,100ZM980.3,606.9 1008.9,608.6 1043.5,610.1 1121.6,611.8 1225.6,612.7 1399,613 1399,100 754.1,100 754.4,213.6 755.2,292.3 756.9,353.5 759.2,397.2 762.4,432.1 764.8,449.6 767.7,467.1 771.6,484.6 774.1,493.3 780.1,510.8 783.4,518.6 788.3,528.3 793.6,537 800,545.7 807.8,554.5 817.4,563.2 826.8,570 835.5,575.2 846.2,580.7 861.5,586.8 870.1,589.7 887.5,594.3 904.8,598 922.1,600.9 939.5,603.1Z"/>
<path fill="#84ffc7" d="M532,974 1399,974 1399,881.1 1121.6,880.6 965.5,879.4 904.8,878.2 870.1,877 826.8,874.8 792.1,872.3 759,869.1 731.4,865 706.7,860.4 679.4,852.9 670.7,849.9 653.9,842.9 644.7,837.9 638.1,834.2 627.4,826.5 616.3,816.7 608.5,807.9 602.1,799.2 596.9,790.5 592.4,781.7 588.7,773 584,759.8 578.3,738 574.7,720.5 570.9,694.3 566.7,657.1 563.6,615.7 561.2,572 559.5,528.3 558,475.8 556.3,336 555.6,100 532,100ZM1171.8,606.9 1399,607.6 1399,100 761.9,100 762.3,231.1 763.5,309.8 765.8,370.9 767.5,397.2 769.9,423.4 772.1,440.9 775,458.3 778.7,475.8 783.6,493.3 790.2,510.8 794.4,519.5 800.8,530.4 809.4,542.2 818.1,551.4 826.8,558.9 835.5,565.1 844.1,570.2 852.8,574.6 867.4,580.7 878.8,584.5 896.1,589.1 913.5,592.7 930.8,595.5 956.8,598.8 982.8,601.1 1008.8,602.8 1043.5,604.4 1078.2,605.5Z"/>
<path fill="#8fffbc" d="M532,974 1399,974 1399,882.3 1130.2,881.9 974.2,880.8 913.5,879.6 861.5,878.1 826.8,876.3 792.1,873.8 757.4,870.4 731.4,866.7 699.1,860.4 679.4,854.8 669.6,851.6 662,848.6 649.2,842.9 644.7,840.5 633.9,834.2 627.4,829.4 622.1,825.4 612.8,816.7 605.2,807.9 601.4,802.7 593.7,790.5 589.4,781.7 585.7,773 579.8,755.5 575.3,738 570.4,711.8 566.7,685.6 563.2,650.6 560.6,615.7 558,571.3 556.2,519.5 555,467.1 553.4,327.2 552.7,100 532,100ZM1033.3,598.2 1086.9,600 1164.9,601.3 1260.3,601.9 1399,602.1 1399,100 769.5,100 769.9,204.9 770.8,283.5 772.5,344.7 775,388.4 778.3,423.4 780.7,440.9 783.8,458.3 787.9,475.8 790.4,484.6 796.6,502 800.8,511.2 805.2,519.5 810.8,528.3 817.5,537 826.8,546.8 835.9,554.5 849.2,563.2 861.5,569.5 870.1,573.3 878.8,576.4 896.1,581.7 913.5,585.7 934.3,589.4 956.8,592.4 982.8,595Z"/>
<path fill="#9bffb1" d="M532,974 1399,974 1399,883.6 1130.2,883.2 974.2,882 913.5,880.9 861.5,879.3 828.6,877.9 792.1,875.2 757.4,871.8 731.4,868.4 696.7,861.5 679.4,856.7 664.2,851.6 644.5,842.9 627.4,832.3 618.4,825.4 609.3,816.7 601.4,807.2 595.9,799.2 590.8,790.5 586.5,781.7 582.8,773 576.9,755.5 572.5,738 566.7,706.6 563,676.8 559.6,641.9 557.1,606.9 554.9,563.2 553.2,510.8 552,458.3 550.5,318.5 549.8,100 532,100ZM990.2,589.4 1017.5,591.4 1052.2,593.1 1130.2,595.2 1234.3,596.3 1399,596.6 1399,100 777.2,100 777.5,204.9 778.4,274.8 780,336 782.4,379.7 785.6,414.6 787.9,432.1 790.9,449.6 794.8,467.1 797.2,475.8 800.8,487 806.8,502 811.2,510.8 816.4,519.5 822.7,528.3 830.3,537 835.5,542 844.1,549.2 852.8,555.2 867.5,563.2 878.8,568 889.7,572 904.8,576.3 922.1,580.4 939.5,583.5 956.8,585.9Z"/>
<path fill="#a6ffa6" d="M532,974 1399,974 1399,884.9 1130.2,884.5 974.2,883.3 922.1,882.4 870.1,880.9 826.8,879 792.1,876.7 757.4,873.3 726.3,869.1 696.7,863.1 679.4,858.6 659,851.6 640.2,842.9 626,834.2 615,825.4 606.1,816.7 598.8,807.9 592.8,799.2 587.9,790.5 583.6,781.7 580.1,773 574.2,755.5 567.9,729.3 564.8,711.8 561.2,685.6 557.5,650.6 555,615.7 552.6,572 550.6,519.5 549.3,468.8 547.9,327.2 547.3,100 532,100ZM1125.9,589.4 1234.3,590.7 1399,591.1 1399,100 784.8,100 785.3,213.6 786.5,292.3 788.8,353.5 792,397.2 794,414.6 796.5,432.1 799.7,449.6 804,467.1 809.4,484.2 813.1,493.3 818.1,503.7 822.2,510.8 826.8,517.8 835,528.3 843.8,537 852.8,544.3 861.5,550.1 870.1,555.1 887.5,562.8 904.8,568.6 917.3,572 939.5,576.5 956.8,579.3 974.2,581.5 1000.2,584 1052.2,587.2Z"/>
<path fill="#b1ff9b" d="M532,974 1399,974 1399,886.2 1130.2,885.8 974.2,884.6 922.1,883.6 870.1,882.2 826.8,880.3 788.8,877.9 748.8,873.7 717.4,869.1 688.1,862.7 679.1,860.4 670.7,857.6 654,851.6 635.9,842.9 622.3,834.2 618.7,831.3 611.5,825.4 602.9,816.7 595.9,807.9 592.7,803.4 585,790.5 577.3,773 571.6,755.5 566.7,736 560.9,703.1 557.5,676.8 554.3,641.9 551.8,606.9 549.3,559.9 546.9,467.1 545.4,327.2 544.8,100 532,100ZM1042.7,580.7 1095.6,582.8 1164.9,584.3 1260.3,585.1 1399,585.4 1399,100 792.4,100 792.8,204.9 793.8,274.8 795.8,336 798.6,379.7 802.4,414.6 805.1,432.1 808.6,449.6 813.3,467.1 816.2,475.8 819.5,484.6 826.8,499.8 833.5,510.8 840.1,519.5 848.2,528.3 852.8,532.4 861.5,539.3 871.3,545.7 887.5,554 896.1,557.5 913.4,563.2 922.1,565.5 939.5,569.4 956.8,572.5 974.2,574.9 1000.2,577.7Z"/>
<path fill="#bcff8f" d="M532,974 1399,974 1399,887.3 1112.9,886.9 974.2,885.8 913.5,884.7 861.5,883.1 818.1,881 783.4,878.7 748.8,875.1 714.1,870 696.7,866.4 673.4,860.4 649.4,851.6 636,845.1 627.4,840 618.7,834.2 608.3,825.4 599.8,816.7 592.9,807.9 587.2,799.2 582.3,790.5 578.3,781.7 574.7,773 571.7,764.2 566.6,746.8 562.9,729.3 559.7,711.8 556.1,685.6 552.5,650.6 549.3,609.6 547.5,572 545.7,519.5 544.5,467.1 543,327.2 542.3,100 532,100ZM1008,572 1034.9,574 1060.9,575.5 1095.6,576.9 1138.9,578 1242.9,579.2 1399,579.7 1399,100 800,100 800.5,204.9 801.6,274.8 803.3,327.2 806,370.9 809.6,405.9 812.2,423.4 815.6,440.9 818.1,451.2 822.8,467.1 826,475.8 829.7,484.6 834.1,493.3 839.3,502 845.4,510.8 853,519.5 861.5,527.5 870.1,534.2 878.8,539.8 889.8,545.7 904.8,552.1 913.5,555.1 922.2,557.7 939.5,562.1 956.8,565.5 974.2,568.1Z"/>
<path fill="#c7ff84" d="M532,974 1399,974 1399,888.4 1112.9,888 956.8,886.8 904.8,885.7 861.5,884.3 818.1,882.3 783.4,879.9 748.8,876.5 714.1,871.4 696.7,868 667.9,860.4 644.9,851.6 628.1,842.9 615.3,834.2 605.2,825.4 596.9,816.7 592.7,811.4 584.4,799.2 575.6,781.7 569.2,764.2 564.3,746.8 558,716.5 553.7,685.6 550,650.6 547.4,615.7 545.1,572 543.3,519.5 542,467.1 540.6,336 540,100 532,100ZM1136.2,572 1234.3,573.3 1399,573.9 1399,100 807.6,100 808.2,204.9 809.6,283.5 810.8,318.5 812.2,344.7 814.1,370.9 815.9,388.4 818.1,405.9 821,423.4 824.7,440.9 829.6,458.3 835.5,474.2 840.3,484.6 845.1,493.3 851,502 858.1,510.8 866.8,519.5 877.7,528.3 887.5,534.5 896.1,539.2 911.2,545.7 922.1,549.5 939.5,554.4 956.8,558.2 974.2,561.2 991.5,563.6 1017.5,566.3 1043.5,568.2 1069.5,569.7Z"/>
<path fill="#d2ff79" d="M532,974 1399,974 1399,889.5 1121.6,889.1 965.5,888 904.8,886.9 870.1,885.9 826.8,884 783.4,881.2 748.1,877.9 714.1,872.8 694.6,869.1 679.4,865.3 662.6,860.4 640.7,851.6 627.4,844.6 612,834.2 602,825.4 592.7,815 587.4,807.9 581.9,799.2 577.2,790.5 573.2,781.7 566.7,764.2 559.9,738 556.4,720.5 551.3,685.6 548.5,659.4 545.7,624.4 543.2,580.7 541.1,528.3 540.1,484.6 538.5,344.7 537.9,100 532,100ZM1066.2,563.2 1121.6,565.4 1190.9,566.9 1277.6,567.6 1399,567.9 1399,100 815.3,100 815.9,204.9 817.2,274.8 819.2,327.2 822.4,370.9 824.3,388.4 826.8,406.3 829.9,423.4 833.9,440.9 839.3,458.3 842.7,467.1 846.6,475.8 851.2,484.6 856.8,493.3 863.4,502 871.5,510.8 881.7,519.5 887.5,523.7 896.1,529.1 912,537 922.1,540.9 936.9,545.7 948.2,548.7 965.5,552.4 982.8,555.4 1017.5,559.6 1043.5,561.8Z"/>
<path fill="#deff6e" d="M532,974 1399,974 1399,890.6 1121.6,890.2 965.5,889.1 904.8,888 855.2,886.6 818.1,884.8 783.4,882.4 740.1,878.2 714.1,874.2 687.9,869.1 662,861.8 653.4,858.7 636.6,851.6 627.4,846.6 621,842.9 610,835.1 599.1,825.4 591.2,816.7 584.7,807.9 579.3,799.2 574.7,790.5 570.8,781.7 567.3,773 564.4,764.2 558,740.3 552.7,711.8 549,685.6 545.5,650.6 542.9,615.7 540.7,576.1 539,528.3 537.8,475.8 536.3,336 535.7,100 532,100ZM1034.7,554.5 1060.9,556.4 1095.6,558.2 1164.9,560.3 1260.3,561.5 1399,562 1399,100 823,100 823.5,187.4 824.6,257.3 826.4,309.8 829.1,353.5 832.8,388.4 835.5,405.9 838.9,423.4 843.4,440.9 846.2,449.6 853.1,467.1 857.6,475.8 862.8,484.6 869,493.3 876.6,502 886.1,510.8 896.1,518.2 904.8,523.5 913.5,528.1 922.1,531.9 936,537 948.2,540.6 965.5,544.8 982.8,548.1 1000.2,550.7Z"/>
<path fill="#e9ff63" d="M532,974 1399,974 1399,891.7 1121.6,891.3 965.5,890.2 904.8,889.1 852.8,887.6 818.1,886 783.4,883.6 748.8,880.4 722.7,877.1 688.1,870.5 679.4,868.5 662,863.4 653,860.4 644.7,857 632.8,851.6 627.4,848.7 617.5,842.9 610,837.5 605.8,834.2 596.3,825.4 588.6,816.7 584,810.6 576.8,799.2 572.3,790.5 568.4,781.7 562.2,764.2 557.3,746.8 553.6,729.3 550.5,711.8 546.9,685.6 543.3,650.6 540.7,616.2 538.5,572 536.7,519.5 535.6,467.1 534.2,327.2 533.6,100 532,100ZM1187.9,554.5 1277.6,555.4 1399,555.8 1399,100 830.9,100 831.6,204.9 833.1,274.8 835.5,327.2 837.5,353.5 839.3,370.9 841.5,388.4 844.4,405.9 848.2,423.4 852.8,439.7 856.3,449.6 859.8,458.3 864,467.1 869,475.8 874.9,484.6 882.1,493.3 890.9,502 902.1,510.8 913.5,517.8 922.1,522.3 936.4,528.3 948.2,532.2 965.7,537 982.8,540.6 1008.9,544.7 1026.2,546.8 1052.2,549.1 1078.2,550.8 1112.9,552.5Z"/>
<path fill="#f4ff58" d="M532,974 1399,974 1399,892.8 1138.9,892.4 991.5,891.6 887.5,889.7 844.1,888.3 807.5,886.6 774.8,884.1 740.1,880.6 719.2,877.9 688.1,871.9 670.7,867.6 648.6,860.4 629,851.6 614.3,842.9 601.4,832.9 593.5,825.4 586,816.7 579.7,807.9 575.4,800.8 570,790.5 566.1,781.7 562.9,773 557.4,755.5 551.4,729.3 548.3,711.8 543.8,676.8 540.7,645.1 538.2,606.9 536.5,572 534.7,519.5 533.5,467.1 532,312.2ZM1107.8,545.7 1156.2,547.4 1216.9,548.5 1295,549.2 1399,549.6 1399,100 838.8,100 839.4,187.4 840.7,257.3 842.8,309.8 846,353.5 848,370.9 850.4,388.4 853.6,405.9 857.8,423.4 861.5,435.6 866.7,449.6 870.7,458.3 875.5,467.1 881.1,475.8 887.8,484.6 896.1,493.3 904.8,500.7 913.5,506.8 922.1,512 938,519.5 948.2,523.3 963.9,528.3 974.2,530.8 991.5,534.5 1008.9,537.3 1026.2,539.6 1052.2,542.2 1078.2,544.1Z"/>
<path fill="#ffff4d" d="M532,974 1399,974 1399,893.8 1147.6,893.5 1000.2,892.7 896.1,891 818.1,888.2 789.9,886.6 766.1,884.6 740.1,881.8 711.1,877.9 688.1,873.3 670.5,869.1 644.7,860.6 636,856.8 625.4,851.6 610,842.2 599.9,834.2 590.8,825.4 584,817.5 575.4,804.8 567.7,790.5 563.9,781.7 557.7,764.2 553.1,746.8 549.3,729.3 545.1,703.1 540.7,667.6 537.9,633.1 535.2,589.4 533.4,545.7 532,495.9ZM1074.4,537 1130.2,540 1190.9,541.6 1277.6,542.7 1399,543.2 1399,100 846.8,100 847.4,187.4 848.6,248.6 850.6,301 853.8,344.7 855.7,362.2 858.1,379.7 863,405.9 867.6,423.4 870.5,432.1 873.8,440.9 878.8,452 882.1,458.3 887.5,467.1 896.1,478.4 904.8,487.4 913.5,494.8 922.1,500.8 930.8,505.9 940.6,510.8 956.8,517.2 965.5,520 982.8,524.6 1000.2,528.2 1017.5,531 1034.9,533.3Z"/>
<path fill="#fff44d" d="M532,974 1399,974 1399,894.9 1156.2,894.6 1008.8,893.9 904.8,892.3 826.8,889.7 792.1,887.8 766.1,885.8 731.4,881.9 705.4,878.2 688.1,874.7 665.4,869.1 640.2,860.4 621.9,851.6 610,844.3 597.1,834.2 588.3,825.4 581,816.7 575.4,808.7 569.9,799.2 565.5,790.5 558.5,773 553.3,755.5 549,738 544.4,711.8 540.7,685.7 538,659.4 535.9,633.1 533.7,598.2 532,562.4ZM1056.2,528.3 1086.9,530.8 1112.9,532.3 1182.2,534.8 1269,536.1 1399,536.8 1399,100 854.9,100 855.5,178.7 856.6,239.8 858.6,292.3 861.5,333.4 863.5,353.5 865.9,370.9 870.7,397.2 875.1,414.6 877.8,423.4 884.7,440.9 889.1,449.6 894.2,458.3 900.4,467.1 907.8,475.8 913.5,481.4 922.1,488.6 930.8,494.7 944.1,502 956.8,507.7 965.5,510.9 974.2,513.6 991.5,518.2 1017.5,523.3 1034.9,525.8Z"/>
<path fill="#ffe94d" d="M532,974 1399,974 1399,895.9 1164.9,895.7 1026.2,895.1 922.1,893.8 844.1,891.5 809.4,889.9 774.8,887.7 757.4,886.2 731.4,883.2 696.6,877.9 670.7,871.9 660.4,869.1 653.4,866.8 636.1,860.4 618.5,851.6 605.1,842.9 594.3,834.2 585.7,825.4 578.6,816.7 572.7,807.9 567.6,799.2 563.4,790.5 556.5,773 551.2,755.5 547.1,738 543.8,720.5 540.7,700.7 537,668.1 534,633.1 532,603.3ZM1192.9,528.3 1277.6,529.5 1399,530.1 1399,100 863.1,100 863.9,187.4 865.3,248.6 867.8,301 869.7,327.2 871.5,344.7 873.8,362.2 876.7,379.7 880.5,397.2 885.4,414.6 888.5,423.4 896.1,440.7 901.2,449.6 907,458.3 914.1,467.1 922.2,475.1 930.8,482.3 939.5,488.2 948.2,493.3 965.5,501.2 982.8,507.1 996.4,510.8 1017.5,515.2 1034.9,518 1069.5,522.1 1095.6,524.2 1121.6,525.7Z"/>
<path fill="#ffde4d" d="M532,974 1399,974 1399,896.9 1156.2,896.6 1017.5,896 930.8,895 852.8,892.9 792.1,889.9 757.4,887.3 740.1,885.5 714.1,881.9 690.2,877.9 670.7,873.3 655.8,869.1 636,861.9 627.4,857.9 615.3,851.6 602.1,842.9 591.7,834.2 583.2,825.4 575.4,815.4 570.4,807.9 565.5,799.2 558,782.8 554.5,773 549.3,756.1 545.2,738 540.7,713.6 538,694.3 535.1,668.1 532,632.8ZM1141.3,519.5 1190.9,521.2 1242.9,522.2 1399,523.3 1399,100 871.5,100 872.4,187.4 873.9,248.6 876.6,301 878.8,327.2 880.7,344.7 883.2,362.2 886.4,379.7 890.7,397.2 893.2,405.9 896.1,414.6 903.6,432.1 908.4,440.9 913.5,448.8 920.9,458.3 929.2,467.1 939.5,475.7 948.2,481.6 956.8,486.6 971.2,493.3 991.5,500.4 1000.2,502.8 1017.5,506.8 1034.9,510 1052.2,512.5 1069.5,514.5 1095.6,516.8Z"/>
<path fill="#ffd24d" d="M532,974 1399,974 1399,897.8 1034.9,897.1 930.8,896 861.5,894.3 826.8,892.9 792.1,891 766.1,889.1 739.5,886.6 714.1,883.1 688.1,878.7 662,872.3 651.3,869.1 628.8,860.4 612.2,851.6 601.4,844.4 592.7,837.3 584,828.9 575.4,818.5 568.2,807.9 563.4,799.2 559.2,790.5 555.6,781.7 549.7,764.2 545.2,746.8 541.5,729.3 538.6,711.8 535.1,685.6 532,655.6ZM1116.9,510.8 1164.9,513.2 1225.6,514.9 1303.6,515.9 1399,516.4 1399,100 880.1,100 880.9,178.7 882.4,239.8 885,292.3 888,327.2 890.2,344.7 893,362.2 896.1,378 898.7,388.4 904.1,405.9 907.4,414.6 911.3,423.4 915.9,432.1 921.4,440.9 928,449.6 936,458.3 945.9,467.1 956.8,474.7 965.5,479.7 974.2,483.9 982.8,487.5 999.5,493.3 1008.9,495.9 1026.2,499.9 1037.5,502 1069.5,506.6 1095.6,509.2Z"/>
<path fill="#ffc74d" d="M532,974 1399,974 1399,898.7 1034.9,898 939.5,897.1 859.8,895.3 826.8,894 792.1,892 766.1,890.1 740.1,887.7 722.7,885.6 705.4,882.9 679.4,878.1 670.7,876 647,869.1 636,864.9 625.3,860.4 609.1,851.6 596.7,842.9 586.7,834.2 578.5,825.4 571.8,816.7 566.1,807.9 558,792.3 553.7,781.7 547.9,764.2 543.4,746.8 539.7,729.3 535.6,703.1 532,674.1ZM1103.8,502 1156.2,505.3 1216.9,507.4 1295,508.6 1399,509.3 1399,100 888.8,100 889.6,169.9 891,231.1 893,274.8 896.6,318.5 898.7,336 901.4,353.5 904.8,370.7 907,379.7 912.2,397.2 915.5,405.9 919.3,414.6 923.8,423.4 929,432.1 935.4,440.9 943.1,449.6 948.2,454.5 956.8,461.6 964.7,467.1 974.2,472.5 982.8,476.8 1000.2,483.6 1008.9,486.3 1034.9,492.8 1052.2,495.9 1069.5,498.4Z"/>
<path fill="#ffbc4d" d="M532,974 1399,974 1399,899.7 1034.9,898.9 939.5,898 861.5,896.3 833.1,895.3 800.8,893.6 748.8,889.6 714.1,885.5 696.7,882.6 672.9,877.9 653.4,872.4 642.9,869.1 627.4,862.8 618.7,858.7 606.3,851.6 594,842.9 584.2,834.2 575.4,824.3 566.7,812.2 559.3,799.2 555.3,790.5 548.7,773 543.7,755.5 539.6,738 535.1,711.8 532,689.6ZM1097.4,493.3 1121.6,495.4 1147.6,497.1 1208.3,499.6 1286.3,501.2 1399,502 1399,100 897.7,100 898.6,169.9 900.2,231.1 902.4,274.8 905.3,309.8 907.4,327.2 910.1,344.7 913.5,362.2 915.6,370.9 918,379.7 922.1,392.6 927.6,405.9 930.8,412.6 937,423.4 943.2,432.1 950.6,440.9 956.8,446.9 965.5,454.1 971.5,458.3 986.8,467.1 1000.2,473 1008.9,476.2 1017.5,478.9 1034.9,483.5 1060.9,488.5 1078.2,491.1Z"/>
<path fill="#ffb14d" d="M532,974 1399,974 1399,900.6 1034.9,899.9 939.5,898.9 861.5,897.2 809.4,895.2 774.8,892.9 748.8,890.7 713.3,886.6 688.1,882.2 670.7,878.6 653.4,873.8 639,869.1 618.6,860.4 603.4,851.6 592.7,843.9 581.9,834.2 574,825.4 566.7,815.5 558,800.5 553.4,790.5 549.3,780.3 544.3,764.2 539.8,746.8 536.3,729.3 532,703ZM1269.3,493.3 1399,494.4 1399,100 906.9,100 908,178.7 910,239.8 911.4,266.1 913.4,292.3 917.6,327.2 920.5,344.7 924.4,362.2 929.4,379.7 932.5,388.4 939.5,404.2 945.4,414.6 951.4,423.4 958.6,432.1 965.5,439 974.2,446.2 982.8,452.2 993.5,458.3 1008.9,465.3 1017.5,468.5 1034.9,473.7 1052.2,477.8 1069.5,480.9 1095.2,484.6 1138.9,488.5 1164.9,490.1 1199.6,491.6Z"/>
<path fill="#ffa64d" d="M532,974 1399,974 1399,901.5 1043.5,900.8 948.2,900 870.1,898.4 800.8,895.7 757.4,892.5 731.4,889.9 705.9,886.6 679.4,881.6 662.8,877.9 644.7,872.4 635.2,869.1 615.5,860.4 601.4,852.1 592.7,845.8 584,838.4 575.4,829.5 566.7,818.4 560.1,807.9 555.5,799.2 549.3,785.1 545.1,773 540.1,755.5 536.3,738 532,714.5ZM1231,484.6 1303.6,485.9 1399,486.7 1399,100 916.3,100 917.3,169.9 919.2,231.1 922.2,277.6 924.5,301 926.8,318.5 929.7,336 933.5,353.5 938.4,370.9 941.5,379.7 948.2,395.1 954.1,405.9 960,414.6 965.5,421.6 974.2,430.6 982.8,438 991.5,444 1000.9,449.6 1017.5,457.3 1026.2,460.5 1043.5,465.8 1052.2,468 1069.5,471.6 1086.9,474.5 1121.6,478.6 1147.6,480.7 1173.6,482.3Z"/>
<path fill="#ff9b4d" d="M532,974 1399,974 1399,902.5 1043.5,901.8 948.2,900.9 870.1,899.3 809.4,897.1 766.1,894.3 740.1,891.9 714.1,888.8 699.1,886.6 679.4,882.8 658.2,877.9 644.7,873.7 631.6,869.1 618.7,863.4 610,859 598,851.6 586.6,842.9 577.3,834.2 569.8,825.4 563.5,816.7 558,807.8 549.6,790.5 546.3,781.7 540.7,764.2 536.4,746.8 532,724.6ZM1215.6,475.8 1295,477.7 1399,478.7 1399,100 925.9,100 927,169.9 929.2,231.1 932.2,274.8 936.2,309.8 940.9,336 945.1,353.5 948.2,363.5 954.3,379.7 958.4,388.4 963.2,397.2 969,405.9 976,414.6 982.8,421.8 991.5,429.3 1000.2,435.5 1009,440.9 1026.2,449 1034.9,452.2 1052.2,457.6 1069.5,461.7 1086.9,465 1104.2,467.6 1121.6,469.7 1164.9,473.3Z"/>
<path fill="#ff8f4d" d="M532,974 1399,974 1399,903.4 1060.9,902.8 965.5,902 887.5,900.7 818.1,898.4 766.1,895.4 722.7,890.9 705.4,888.6 688.1,885.7 670.7,882.1 653.6,877.9 627.4,868.9 609.5,860.4 595.4,851.6 584.1,842.9 575.4,834.4 567.7,825.4 561.5,816.7 556.3,807.9 549.3,793.9 544.6,781.7 540.7,770 536.8,755.5 532,733.6ZM1211.9,467.1 1286.3,469.2 1399,470.4 1399,100 935.8,100 937,169.9 939,222.4 942,266.1 946,301 950.6,327.2 954.8,344.7 957.4,353.5 963.9,370.9 968,379.7 972.8,388.4 978.5,397.2 985.4,405.9 991.5,412.4 1000.2,420.1 1008.9,426.5 1017.5,431.9 1026.2,436.3 1036.3,440.9 1052.2,446.5 1062.8,449.6 1078.2,453.3 1095.6,456.6 1112.9,459.2 1130.2,461.3 1156.2,463.8 1182.2,465.6Z"/>
<path fill="#ff844d" d="M532,974 1399,974 1399,904.3 1060.9,903.7 965.5,903 887.5,901.6 818.1,899.3 766.1,896.3 748.8,894.9 722.7,892 686.5,886.6 670.7,883.2 649.4,877.9 624.7,869.1 610,862.2 601.4,857.2 592.7,851.6 581.9,842.9 573,834.2 565.7,825.4 558,814.2 549.9,799.2 546.2,790.5 539.9,773 535.2,755.5 532,741.7ZM1216.1,458.3 1295,460.7 1399,461.9 1399,100 946,100 947.4,169.9 949.6,222.4 952.9,266.1 956.8,297.2 959,309.8 962.7,327.2 965.5,338.1 970.5,353.5 973.9,362.2 978,370.9 982.8,379.8 991.5,392.4 1000.2,402.4 1008.9,410.4 1017.5,417 1026.2,422.5 1034.9,427.1 1045.9,432.1 1060.9,437.5 1069.5,440.2 1095.6,446.2 1112.9,449.3 1130.2,451.7 1147.6,453.6 1173.6,455.8Z"/>
<path fill="#ff794d" d="M532,974 1399,974 1399,905.1 1043.5,904.5 956.8,903.8 878.8,902.3 809.4,899.8 757.4,896.5 722.7,893 696.7,889.3 680.8,886.6 662,882.3 645.3,877.9 621.4,869.1 610,863.6 601.4,858.9 590.4,851.6 579.7,842.9 571,834.2 563.8,825.4 557.7,816.7 549.3,801.6 544.5,790.5 540.7,780.3 535.8,764.2 532,749.1ZM1227.5,449.6 1303.6,451.9 1399,453 1399,100 956.6,100 957.9,161.2 960.1,213.6 962.6,248.6 966.6,283.5 969.5,301 973.1,318.5 978,336 981,344.7 984.5,353.5 988.6,362.2 993.3,370.9 1000.2,381.3 1005.9,388.4 1014.3,397.2 1024.8,405.9 1034.9,412.6 1043.5,417.4 1056.6,423.4 1069.5,428.1 1078.2,430.8 1086.9,433.2 1104.2,437.1 1121.6,440.2 1138.9,442.7 1156.2,444.6 1182.2,446.9Z"/>
<path fill="#ff6e4d" d="M532,974 1399,974 1399,905.9 1052.2,905.4 956.8,904.6 887.5,903.5 818.1,901.1 766.1,898.1 731.4,895.1 705.4,891.7 688.1,888.9 670.7,885.6 644.7,878.8 636,876 618.7,869.3 601.1,860.4 588,851.6 577.4,842.9 568.9,834.2 561.8,825.4 555.9,816.7 550.8,807.9 546.6,799.2 540.7,784.9 536.8,773 532,755.9ZM1247,440.9 1312.3,442.7 1399,443.9 1399,100 967.6,100 969,161.2 971.4,213.6 973.4,239.8 975.2,257.3 977.5,274.8 980.4,292.3 982.8,304.4 986.4,318.5 991.5,334.7 995.5,344.7 999.6,353.5 1004.4,362.2 1010.1,370.9 1017,379.7 1025.5,388.4 1034.9,396.2 1043.5,402.1 1049.9,405.9 1060.9,411.4 1069.5,415.1 1078.2,418.3 1095.6,423.5 1121.6,429.2 1138.9,432.1 1156.2,434.3 1199.6,438.3Z"/>
<path fill="#ff634d" d="M532,974 1399,974 1399,906.7 1052.2,906.2 956.8,905.4 878.8,904.2 818.1,902.1 766.1,899 725.1,895.3 688.1,889.9 670.2,886.6 653.4,882.4 637.6,877.9 627.4,874.1 615.2,869.1 601.4,862 592.7,856.6 584,850.4 575.2,842.9 566.8,834.2 559.9,825.4 554.1,816.7 549,807.9 541.1,790.5 535.2,773 532,761.9ZM1277.9,432.1 1329.6,433.4 1399,434.3 1399,100 978.9,100 980.5,161.2 982.8,207.3 986.5,248.6 988.8,266.1 991.7,283.5 995.5,301 997.8,309.8 1000.4,318.5 1007,336 1011.2,344.7 1016.1,353.5 1021.9,362.2 1029,370.9 1037.6,379.7 1043.5,384.7 1052.2,391 1062.4,397.2 1078.2,404.6 1086.9,407.9 1104.2,413.3 1112.9,415.6 1130.2,419.3 1147.6,422.2 1182.2,426.4 1225.6,429.8Z"/>
<path fill="#ff584d" d="M532,974 1399,974 1399,907.5 1052.2,907 956.8,906.2 878.8,905 826.8,903.4 774.8,900.5 731.4,896.9 717,895.3 696.7,892.4 665.4,886.6 653.4,883.5 634,877.9 618.7,871.9 610,868 596,860.4 583.3,851.6 573.2,842.9 564.9,834.2 558,825.4 552.3,816.7 547.4,807.9 540.7,793.3 536.4,781.7 532,767.6ZM1332,423.4 1399,424.4 1399,100 990.7,100 992.6,161.2 993.9,187.4 995.7,213.6 997.3,231.1 1000.2,254.4 1002,266.1 1005.4,283.5 1008.9,297.7 1012.5,309.8 1017.5,323.3 1023.5,336 1028.5,344.7 1034.9,354.1 1041.6,362.2 1050.5,370.9 1060.9,379.1 1069.5,384.6 1078.2,389.4 1086.9,393.4 1096,397.2 1112.9,402.6 1125.4,405.9 1138.9,408.8 1156.2,411.9 1173.6,414.3 1190.9,416.3 1216.9,418.5 1269,421.5Z"/>
<path fill="#ff4d4d" d="M532,974 1399,974 1399,908.3 1043.5,907.7 948.2,906.9 870.1,905.6 826.8,904.3 774.8,901.4 731.4,897.8 714.1,895.9 696.7,893.4 679.4,890.4 660.7,886.6 644.7,882.3 630.5,877.9 609.3,869.1 593.4,860.4 584,853.8 575.4,846.7 566.7,838.2 558,827.8 550.6,816.7 545.8,807.9 540.7,797.2 534.9,781.7 532,773ZM1202.1,405.9 1242.9,409.2 1286.3,411.4 1338.3,412.9 1399,413.9 1399,100 1003.1,100 1004.8,152.4 1007.3,196.1 1010.6,231.1 1014.4,257.3 1017.5,273.2 1020,283.5 1025.1,301 1032.1,318.5 1036.4,327.2 1041.6,336 1047.8,344.7 1052.2,350.1 1055.3,353.5 1064.5,362.2 1069.5,366.2 1078.2,372.2 1086.9,377.3 1095.6,381.6 1112.9,388.5 1121.6,391.3 1138.9,395.9 1164.9,401 1182.2,403.6Z"/>
<path fill="#f44d4d" d="M532,974 1399,974 1399,909.1 1052.2,908.6 956.8,907.8 870.1,906.5 826.8,905.3 783.4,902.9 740.1,899.5 705.4,895.8 679.4,891.4 662,887.9 653.4,885.8 636,880.8 627.1,877.9 610,870.7 601.4,866.3 591,860.4 578.9,851.6 569.2,842.9 561.2,834.2 554.5,825.4 548.8,816.7 540.7,800.8 536.5,790.5 532,777.7ZM1237.3,397.2 1269,399.2 1303.6,400.8 1347,402.1 1399,403 1399,100 1016,100 1017.5,144.3 1020.1,187.4 1023.6,222.4 1027.5,248.6 1033.2,274.8 1035.7,283.5 1041.8,301 1045.7,309.8 1050.2,318.5 1055.6,327.2 1060.9,334.5 1069.9,344.7 1078.2,352.3 1086.9,358.8 1095.6,364.3 1104.2,368.9 1112.9,372.9 1121.6,376.3 1138.9,381.9 1156.2,386.2 1167.1,388.4 1199.6,393.4Z"/>
<path fill="#e94d4d" d="M532,974 1399,974 1399,909.9 1043.5,909.3 948.2,908.5 861.5,907.2 826.8,906.3 800.8,905.1 748.8,901.2 705.4,896.9 679.4,892.4 662,888.9 653.4,887 636,881.9 623.9,877.9 610,872 601.4,867.8 588.7,860.4 576.8,851.6 567.2,842.9 559.3,834.2 552.8,825.4 547.2,816.7 540.7,804.2 534.9,790.5 532,782.4ZM1291.6,388.4 1338.3,390.2 1399,391.5 1399,100 1029.6,100 1031.3,143.7 1034.3,187.4 1038.4,222.4 1042.9,248.6 1047.2,266.1 1049.8,274.8 1052.7,283.5 1056.2,292.3 1060.2,301 1065,309.8 1070.7,318.5 1078.2,328.1 1085.8,336 1095.6,344.2 1109.7,353.5 1121.6,359.5 1130.2,363.2 1138.9,366.4 1153.5,370.9 1164.9,373.8 1182.2,377.4 1208.3,381.5 1242.9,385.2Z"/>
<path fill="#de4d4d" d="M532,974 1399,974 1399,910.7 1034.9,910.1 948.2,909.4 844.1,907.7 818.1,907 792.1,905.7 740.1,901.3 705.4,898 696.7,896.8 653.4,888.3 627.4,880.2 618.7,877 601.4,869.3 586.4,860.4 574.7,851.6 565.3,842.9 557.5,834.2 549.3,822.8 540.9,807.9 537,799.2 532,786.6ZM1233.1,370.9 1269,374.2 1303.6,376.4 1347,378.1 1399,379.4 1399,100 1043.9,100 1045.9,143.7 1048.6,178.7 1051.5,204.9 1055.8,231.1 1060.9,253.3 1064.8,266.1 1067.9,274.8 1071.6,283.5 1075.9,292.3 1080.9,301 1086.9,309.7 1095.6,319.8 1103.3,327.2 1112.9,334.7 1121.6,340.3 1129.5,344.7 1138.9,349.1 1156.2,355.6 1180,362.2 1208.3,367.5Z"/>
<path fill="#d24d4d" d="M532,974 1399,974 1399,911.5 1034.9,910.9 948.2,910.2 835.5,908.4 809.4,907.8 783.4,906.5 696.7,898.1 662,890.9 653.4,889.5 618.7,878.5 601.4,870.8 584.1,860.4 572.7,851.6 566.7,846.1 555.8,834.2 549.3,825.4 544,816.7 539.3,807.9 532,790.7ZM1290.7,362.2 1338.3,364.7 1399,366.5 1399,100 1059.1,100 1061.4,143.7 1064.6,178.7 1068.1,204.9 1073.2,231.1 1078.2,249.7 1080.8,257.3 1086.9,272.3 1092.7,283.5 1095.6,288.3 1104.7,301 1112.7,309.8 1121.6,317.6 1135.5,327.2 1152.4,336 1164.9,341 1173.6,343.9 1182.2,346.4 1199.6,350.7 1225.6,355.4 1260.3,359.6Z"/>
<path fill="#c74d4d" d="M532,974 1399,974 1399,912.3 1043.5,911.7 956.8,911.1 826.8,909.2 800.8,908.6 774.8,907.3 757.4,905.4 750.4,904.1 722.7,901.4 696.7,899.4 688.1,898.1 678.8,895.3 662,891.9 653.4,890.8 644.7,888.8 640.3,886.6 627.4,882.5 618.7,880.3 614.7,877.9 601.4,872.3 584,862.3 570.7,851.6 566.7,847.9 561.6,842.9 554.1,834.2 547.4,825.4 542.4,816.7 537.7,807.9 532,794.4ZM1260.9,344.7 1286.3,347.3 1321,349.7 1355.7,351.4 1399,352.8 1399,100 1075.2,100 1077.3,135 1079.7,161.2 1083,187.4 1087.8,213.6 1092.2,231.1 1094.9,239.8 1101.7,257.3 1106,266.1 1111,274.8 1117.1,283.5 1124.3,292.3 1130.2,298.2 1138.9,305.6 1147.6,311.7 1156.2,316.9 1164.9,321.2 1173.6,325 1190.9,331.1 1209.1,336 1234.3,340.9Z"/>
<path fill="#bc4d4d" d="M532,974 1399,974 1399,914 1216.9,913.6 1017.5,912.4 809.4,910 783.4,909.2 766.1,908.3 748.8,906.2 740.4,904.1 722.7,902.3 696.7,900.7 688.1,899.8 679.4,898 673.7,895.3 662,892.9 653.4,892.1 644.7,890.6 636.6,886.6 627.4,883.6 618.7,882 611.8,877.9 601.4,873.9 592.7,868.6 584,864.2 566.7,849.7 559.8,842.9 552.4,834.2 545.6,825.4 536.1,807.9 532,798.1ZM1344.7,336 1399,338.1 1399,100 1092.5,100 1095,135 1097.9,161.2 1101.9,187.4 1104.2,198.9 1107.9,213.6 1113.4,231.1 1116.9,239.8 1121.6,250 1125.6,257.3 1131.2,266.1 1138,274.8 1146.3,283.5 1156.6,292.3 1164.9,298 1173.6,303.1 1182.2,307.4 1190.9,311.1 1208.3,317.1 1216.9,319.6 1242.9,325.3 1269,329.4 1303.6,333.1Z"/>
<path fill="#b14d4d" d="M532,974 1399,974 1399,916.9 1199.6,916.6 1086.9,916 1017.5,914.8 971.5,912.8 887.5,911.6 783.4,910.6 766.1,910 748.8,908.8 740.1,907.4 731.4,904.1 714.1,902.6 688.1,901.4 679.4,900.3 670.7,897.2 668.7,895.3 662,893.9 644.7,892.4 636,889.6 633,886.6 627.4,884.8 618.7,883.8 610,879.6 608.3,877.9 601.4,875.4 592.7,871.5 590.3,869.1 584,866.1 577.7,860.4 566.7,851.6 557.8,842.9 550.7,834.2 543.7,825.4 540.7,819.8 537.5,816.7 534.5,807.9 532,801.9ZM1328.1,318.5 1364.3,320.8 1399,322.3 1399,100 1111.2,100 1114.2,135 1117.7,161.2 1121.6,182.1 1127.4,204.9 1130.2,213.6 1133.6,222.4 1137.4,231.1 1142,239.8 1147.3,248.6 1153.8,257.3 1161.7,266.1 1173.6,276.5 1182.2,282.6 1190.9,287.6 1199.6,292 1208.3,295.7 1223.1,301 1242.9,306.4 1269,311.6 1295,315.2Z"/>
<path fill="#b14d4d" d="M532,974 1399,974 1399,919.8 1121.6,919.6 1000.2,918.8 965.5,918.1 939.5,916.9 922.1,915.2 911.5,912.8 887.5,912.4 774.8,911.9 757.4,911.6 740.1,910.8 731.4,909.5 723.1,904.1 714.1,903.5 679.4,902.7 670.7,901.5 664,895.3 662,894.9 644.7,894.2 636,893.2 629.5,886.6 627.4,885.9 618.7,885.5 610,883.9 604,877.9 601.4,876.9 592.7,875.5 586.4,869.1 584,868 575.4,860.2 566.7,857 552.5,842.9 549.3,836.4 547.1,834.2 540.7,823.3 534.1,816.7 533,807.9 532,805.6ZM1334.5,301 1364.3,303.3 1399,305.2 1399,100 1131.4,100 1134.2,126.2 1138,152.4 1143.7,178.7 1148.9,196.1 1155.9,213.6 1160.4,222.4 1164.9,230 1173.6,241.8 1182.2,251.2 1190.9,258.8 1199.6,265.1 1208.3,270.3 1216.8,274.8 1225.6,278.6 1238.8,283.5 1260.3,289.6 1277.6,293.4 1303.6,297.5Z"/></g>
<g fill="none" stroke-width="1.2"><path stroke="#0000af" d="M1399,819.2 1216.9,818.5 1095.6,817.2 1034.9,815.5 1000.2,813.9 965.5,811.8 920,807.9 896.1,803.7 874.1,799.2 854.9,790.5 851.8,781.7 861.5,775.2 865.4,773 878.8,769.7 896.1,766.3 909.4,764.2 922.1,763 974.2,759.5 1034.9,757.2 1117.7,755.5 1234.3,754.6 1399,754"/>
<path stroke="#0000ff" d="M1399,843 1164.9,842.4 1086.9,841.7 1017.5,840.6 965.5,839.3 913.5,837.1 866.5,834.2 844.1,831.8 809.4,827 799.5,825.4 792.1,823.7 764.6,816.7 742.7,807.9 728.2,799.2 718.4,790.5 712,781.7 708.6,773 707.6,764.2 709.2,755.5 713.8,746.8 722.7,738.2 731.4,733.2 740.9,729.3 757.4,725 774.8,722.2 800.8,719.8 826.8,718.5 852.8,717.7 948.2,716.4 1130.2,715.5 1399,715"/>
<path stroke="#0060ff" d="M1399,856.9 1121.6,856.3 1034.9,855.5 965.5,854.3 904.8,852.5 870.1,850.7 826.8,847.3 787.2,842.9 766.1,839.2 742.6,834.2 722.7,828 714.1,824.9 696.7,816.8 683,807.9 672.9,799.2 670.7,796.8 665.2,790.5 659.4,781.7 655,773 651.9,764.2 649.7,755.5 648.4,746.8 647.7,738 647.8,729.3 648.6,720.5 650,711.8 652.2,703.1 655.4,694.3 662,682.4 670.7,673.7 679.4,669.1 688.1,666.9 696.7,666 705.4,666.1 714.1,666.7 774.8,674 818.1,678.1 861.5,680.7 913.5,682.5 974.2,683.5 1060.9,684.1 1399,684.2"/>
<path stroke="#00afff" d="M1399,867.6 1156.2,867.2 1008.8,866.1 956.8,865.2 904.8,863.8 861.5,862 826.8,859.9 792.1,856.6 757.4,852.1 740.1,848.8 714.4,842.9 688.9,834.2 670.8,825.4 657.4,816.7 647,807.9 638.9,799.2 632.5,790.5 627.2,781.7 623.1,773 619.6,764.2 614.6,746.8 611.2,729.3 609,711.8 607.7,694.3 605.9,650.6 601.4,472.1 600.5,423.4 598.8,283.5 597.9,100M680.6,100 680.5,274.8 681.5,370.9 682.5,405.9 683.8,432.1 685.7,458.3 688.6,484.6 692.8,510.8 697,528.3 702.3,545.7 709.8,563.2 714.6,572 720.2,580.7 726.9,589.4 735.2,598.2 745.5,606.9 758.6,615.7 774.8,623.9 792.1,630.5 809.4,635.5 826.8,639.5 852.8,643.9 878.8,647 904.8,649.2 930.8,650.9 965.5,652.4 1052.2,654.3 1173.6,655.1 1399,655.2"/>
<path stroke="#10ffef" d="M1399,876.3 1147.6,875.9 1000.2,874.9 896.1,872.7 852.8,871 818.1,869.1 774.8,865.1 740.1,860.5 722.7,857.1 699,851.6 673.1,842.9 654.6,834.2 640.8,825.4 630,816.7 621.5,807.9 618.7,804.6 614.6,799.2 608.8,790.5 604.2,781.7 600.2,773 594.1,755.5 589.7,738 584.8,711.8 581.5,685.6 579,659.4 575.7,615.7 573.8,580.7 571.5,519.5 570,458.3 568.2,318.5 567.4,100M734.1,100 734.5,248.6 736,344.7 737.2,379.7 738.7,405.9 740.7,432.1 743.7,458.3 748.2,484.6 752.3,502 757.9,519.5 761.3,528.3 765.4,537 770.2,545.7 774.8,552.7 783,563.2 791.5,572 800.8,579.5 809.4,585.4 816.4,589.4 826.8,594.5 835.4,598.2 844.1,601.3 861.5,606.4 878.8,610.3 904.8,614.7 922.1,616.9 948.2,619.4 974.2,621.2 1008.9,622.9 1052.2,624.3 1095.6,625.1 1208.3,626 1399,626.3"/>
<path stroke="#70ff8f" d="M1399,883.7 1138.9,883.3 991.5,882.3 887.5,880.3 844.1,878.7 809.4,876.7 774.8,873.8 740.1,869.8 714.1,865.3 691.5,860.4 663.7,851.6 644.7,843.2 629.6,834.2 618.1,825.4 609.1,816.7 601.6,807.9 595.6,799.2 590.5,790.5 586.2,781.7 582.6,773 579.5,764.2 574.3,746.8 568.8,720.5 564.8,694.3 560.9,659.4 558,625.4 555.5,580.7 553.5,528.3 552.1,475.8 550.3,336 549.6,100M777.8,100 778.4,231.1 780,318.5 781.5,353.5 783,379.7 785.3,405.9 788.6,432.1 791.6,449.6 795.5,467.1 800.6,484.6 807.6,502 812.1,510.8 817.3,519.5 823.6,528.3 831.3,537 840.8,545.7 853,554.5 869.1,563.2 878.8,567.4 896.1,573.3 913.5,577.9 930.8,581.5 956.8,585.4 982.8,588.3 1008.9,590.4 1043.5,592.3 1078.2,593.6 1121.6,594.6 1225.6,595.8 1399,596.2"/>
<path stroke="#bfff40" d="M1399,890.2 1121.6,889.8 965.5,888.7 865.7,886.6 818.1,884.4 783.4,882 740.9,877.9 714.1,873.7 690.1,869.1 662,861.3 653.4,858.1 638,851.6 627.4,845.9 622.2,842.9 610,834.3 601.4,826.6 592.1,816.7 585.6,807.9 580.2,799.2 575.4,790.3 571.6,781.7 566.7,768.8 560.4,746.8 558,736.9 554.9,720.5 549.7,685.6 547,659.4 544.2,624.4 541.7,580.7 540,537 538.7,484.6 537.1,344.7 536.5,100M820.5,100 821.4,222.4 823.4,301 825.1,336 827.1,362.2 830,388.4 832.6,405.9 835.9,423.4 840.2,440.9 846,458.3 852.8,473.7 861.5,488.5 870.1,499.8 878.8,508.7 887.5,515.9 896.1,521.9 907.2,528.3 922.1,535 939.5,540.9 956.8,545.5 974.2,549.1 1000.2,553.1 1026.2,555.9 1052.2,558 1086.9,560 1156.2,562.2 1251.6,563.4 1399,564"/>
<path stroke="#ffdf00" d="M1399,896.2 1164.9,895.9 1019.2,895.3 922.1,894.1 852.8,892.1 818.1,890.6 783.4,888.6 758.5,886.6 740.1,884.6 714.1,881 695,877.9 679.4,874.4 659.2,869.1 635.2,860.4 617.7,851.6 604.3,842.9 593.6,834.2 584,824.2 575.4,812.9 566.7,798.6 559.1,781.7 553.2,764.2 549.3,750.3 544.9,729.3 540.7,704.2 537.4,676.8 534.1,641.9 532,611.6M865.3,100 866.4,204.9 868.5,274.8 870,301 872,327.2 875,353.5 877.6,370.9 881,388.4 885.4,405.9 891.3,423.4 896.1,434.6 904.4,449.6 910.5,458.3 917.9,467.1 922.1,471.4 930.8,478.9 939.5,485.2 953.7,493.3 965.5,498.6 982.8,504.7 1000.2,509.5 1017.5,513.1 1034.9,516 1060.9,519.3 1086.9,521.7 1112.9,523.4 1147.6,525.1 1182.2,526.2 1269,527.7 1399,528.4"/>
<path stroke="#ff8f00" d="M1399,901.4 1043.5,900.7 948.2,899.8 870.1,898.3 800.8,895.6 757.4,892.4 731.4,889.7 707.1,886.6 679.4,881.4 663.5,877.9 644.7,872.2 635.7,869.1 616,860.4 601.4,851.9 592.7,845.5 584,838.1 575.4,829.1 566.7,818 560.4,807.9 555.8,799.2 548.3,781.7 542.7,764.2 540.3,755.5 536.5,738 532,712.8M914.8,100 916.2,187.4 917.3,222.4 919.1,257.3 921.1,283.5 922.9,301 926.5,327.2 929.7,344.7 934,362.2 939.5,379.6 943,388.4 948.2,399.2 956.8,413.5 964.5,423.4 973,432.1 982.8,440.3 997.2,449.6 1008.9,455.4 1017.5,459.1 1034.9,465 1052.2,469.5 1069.5,473.1 1086.9,475.9 1104.2,478.2 1147.6,482.1 1173.6,483.6 1208.3,485.1 1286.3,486.9 1399,487.9"/>
<path stroke="#ff3000" d="M1399,906.2 1052.2,905.7 956.8,905 887.5,903.9 818.1,901.5 766.1,898.5 729.9,895.3 705.4,892.1 688.1,889.3 673.1,886.6 653.4,881.7 639.8,877.9 627.4,873.3 616.9,869.1 601.4,861.2 592.7,855.6 584,849.3 576.5,842.9 566.7,832.6 558,821.1 550,807.9 545.8,799.2 540.7,786.8 536.1,773 532,758.5M972.4,100 974.2,169.9 977.1,222.4 979.5,248.6 981.6,266.1 984.3,283.5 987.8,301 991.5,315.7 995.1,327.2 1000.2,340.4 1006.5,353.5 1011.8,362.2 1018,370.9 1025.6,379.7 1034.9,388.4 1046.9,397.2 1060.9,405.1 1069.5,409.1 1084.2,414.6 1095.6,418.1 1112.9,422.5 1130.2,425.9 1147.6,428.5 1164.9,430.7 1190.9,433.2 1242.9,436.4 1312.3,438.6 1399,439.8"/>
<path stroke="#cf0000" d="M1399,910.8 1034.9,910.1 948.2,909.4 844.1,907.7 818.1,907 792.1,905.8 740.1,901.4 705.4,898 696.7,896.8 653.4,888.3 627.4,880.3 618.7,877.1 601.4,869.3 586.3,860.4 574.6,851.6 565.2,842.9 557.5,834.2 549.3,822.9 540.8,807.9 536.9,799.2 532,786.7M1044.2,100 1046.2,143.7 1049.8,187.4 1051.8,204.9 1054.5,222.4 1057.9,239.8 1060.9,251.9 1065.1,266.1 1068.3,274.8 1072,283.5 1078.2,295.8 1087.4,309.8 1094.8,318.5 1104.2,327.5 1112.9,334.2 1121.6,339.9 1130.3,344.7 1147.6,352.2 1156.2,355.3 1173.6,360.3 1182.2,362.4 1199.6,365.8 1216.9,368.5 1234.3,370.8 1277.6,374.6 1329.6,377.3 1399,379.1"/>
<path stroke="#8f0000" d="M1399,921.6 887.5,921.6 878.8,912.8 722.7,912.8 714.1,904.1 662,904.1 653.4,895.3 636,895.3 627.4,886.6 610,886.6 601.4,877.9 592.7,877.9 584,869.1 575.4,869.1 540.7,834.2 540.7,825.4 532,816.7 532,807.9M1147.6,100 1147.6,117.5 1156.2,126.2 1156.2,161.2 1164.9,169.9 1164.9,187.4 1173.6,196.1 1173.6,204.9 1182.2,213.6 1182.2,222.4 1216.9,257.3 1225.6,257.3 1234.3,266.1 1251.6,266.1 1260.3,274.8 1286.3,274.8 1295,283.5 1364.3,283.5 1373,292.3 1399,292.3"/></g><defs><clipPath id="pc"><rect x="532" y="100" width="867" height="874"/></clipPath></defs><g clip-path="url(#pc)" shape-rendering="crispEdges"><path fill="#000" d="M630.1,393 646.8,401 647.7,440.6 649,442.5 649,449.5 645.5,452 640,456 631,447.8 631,428.5 630.1,427.2Z"/><path stroke="#000" stroke-width="1" fill="none" d="M646,410.6H651M646,411.9H651M646,418.6H651M646,428.5H651M646,436.6H651M646,446.4H651M646,461.2H651M627,433.4H632M627,446H632"/><path fill="none" stroke="#000" stroke-width="6.8" stroke-linejoin="round" stroke-linecap="butt" d="M640.0,441.0C640.0,442.0 638.9,444.8 640.0,447.0C641.1,449.2 645.2,452.5 646.5,454.5C647.8,456.5 649.4,458.0 648.0,459.0C646.6,460.0 641.1,459.8 638.0,460.5C634.9,461.2 630.0,462.6 629.5,463.5C629.0,464.4 633.0,464.7 635.0,466.0C637.0,467.3 638.8,468.6 641.8,471.1C644.8,473.6 653.3,479.0 653.0,481.2C652.7,483.4 643.7,483.0 640.0,484.4C636.3,485.8 630.5,486.0 631.0,489.3C631.5,492.6 639.1,499.4 642.9,504.0C646.7,508.6 653.1,513.6 653.8,517.2C654.5,520.9 649.7,523.2 647.2,525.9C644.7,528.6 640.3,531.0 639.0,533.6C637.7,536.2 638.8,538.5 639.6,541.5C640.4,544.5 641.8,547.5 644.0,551.4C646.2,555.3 650.0,560.2 653.0,564.8C656.0,569.4 659.5,574.4 662.0,579.2C664.5,584.0 666.6,589.0 668.3,593.5C669.9,598.0 670.7,601.5 671.9,606.0C673.1,610.5 674.1,615.3 675.4,620.4C676.7,625.5 678.2,631.4 679.9,636.5C681.5,641.6 683.2,645.8 685.3,650.9C687.4,656.0 689.8,661.6 692.5,667.0C695.2,672.4 698.4,677.7 701.4,683.1C704.4,688.5 707.3,694.1 710.4,699.3C713.5,704.4 713.4,705.5 720.0,714.0C726.6,722.5 740.0,738.3 750.0,750.0C760.0,761.7 770.0,772.3 780.0,784.0C790.0,795.7 801.2,809.8 810.0,820.0C818.8,830.2 827.3,839.1 833.0,845.0C838.7,850.9 841.4,853.1 844.0,855.5C846.6,857.9 848.3,859.5 848.5,859.5C848.7,859.5 847.6,859.2 845.4,855.5C843.1,851.8 839.5,844.1 835.0,837.4C830.5,830.7 825.1,824.1 818.5,815.5C811.9,806.9 802.9,795.6 795.6,785.6C788.4,775.6 781.3,764.7 775.0,755.7C768.7,746.7 766.1,741.1 757.7,731.8C749.3,722.5 731.4,706.3 724.7,700.0C718.0,693.7 721.5,697.6 717.6,693.9C713.7,690.2 706.5,682.9 701.4,677.8C696.3,672.7 692.2,667.9 687.1,663.4C682.0,658.9 676.1,655.4 671.0,650.9C665.9,646.4 661.5,641.6 656.6,636.5C651.7,631.4 645.3,624.9 641.4,620.4C637.5,615.9 635.1,612.6 633.3,609.6C631.5,606.6 630.0,604.7 630.6,602.5C631.2,600.3 632.9,597.2 636.9,596.2C640.9,595.2 648.8,595.8 654.8,596.2C660.8,596.7 666.7,597.8 672.7,598.9C678.7,600.0 685.3,601.3 690.7,602.8C696.1,604.3 701.1,606.1 705.0,607.8C708.9,609.5 711.9,611.1 714.0,613.2C716.1,615.3 716.7,616.8 717.6,620.4C718.5,624.0 718.7,629.3 719.4,634.7C720.1,640.1 720.8,646.4 722.0,652.7C723.2,659.0 724.5,666.1 726.5,672.4C728.5,678.7 731.9,685.8 733.7,690.3C735.5,694.8 734.3,693.7 737.3,699.3C740.3,704.9 746.4,716.7 751.8,723.8C757.2,730.9 763.4,735.8 769.7,741.8C776.0,747.8 783.0,753.7 789.6,759.7C796.2,765.7 802.9,771.3 809.5,777.6C816.1,783.9 822.8,791.2 829.4,797.5C836.0,803.8 842.8,809.5 849.4,815.5C856.0,821.5 862.7,827.8 869.3,833.4C875.9,839.0 883.6,845.2 889.2,849.3C894.8,853.4 900.1,856.2 903.1,857.8C906.1,859.4 907.2,860.1 907.5,859.0C907.8,857.9 907.0,855.6 905.0,851.0C903.0,846.4 899.6,839.3 895.2,831.2C890.8,823.1 884.4,812.9 878.4,802.5C872.4,792.1 865.3,779.5 859.3,769.1C853.3,758.8 847.8,750.0 842.6,740.4C837.4,730.8 832.4,720.1 828.2,711.7C824.0,703.3 820.3,696.2 817.5,690.2C814.7,684.2 812.3,679.9 811.5,675.9C810.7,671.9 811.3,668.7 812.7,666.3C814.1,663.9 816.9,662.1 819.9,661.5C822.9,660.9 825.6,661.1 830.6,662.7C835.6,664.3 842.6,666.9 849.8,671.1C857.0,675.3 865.7,681.8 873.7,687.8C881.7,693.8 889.6,700.5 897.6,706.9C905.6,713.3 913.5,719.6 921.5,726.0C929.5,732.4 937.4,738.4 945.4,745.2C953.4,752.0 961.3,759.5 969.3,766.7C977.3,773.9 985.2,781.0 993.2,788.2C1001.2,795.4 1009.1,802.9 1017.1,809.7C1025.1,816.5 1033.0,822.4 1041.0,828.8C1049.0,835.2 1058.1,842.9 1064.9,847.9C1071.7,852.9 1077.6,856.8 1081.6,859.0C1085.6,861.2 1087.8,861.9 1088.8,861.1C1089.8,860.3 1088.3,856.6 1087.5,854.0C1086.7,851.4 1086.6,850.5 1084.0,845.5C1081.4,840.5 1077.2,832.8 1072.0,824.0C1066.8,815.2 1059.3,803.0 1052.9,793.0C1046.5,783.0 1039.8,773.9 1033.8,764.3C1027.8,754.7 1022.7,744.8 1017.1,735.6C1011.5,726.4 1005.5,716.9 1000.3,709.3C995.1,701.7 989.8,695.0 986.0,690.2C982.2,685.4 979.4,683.4 977.6,680.6C975.8,677.8 975.0,675.4 975.2,673.5C975.4,671.6 976.6,669.8 978.8,669.2C981.0,668.6 984.0,668.4 988.4,669.9C992.8,671.4 998.3,674.2 1005.1,678.2C1011.9,682.2 1021.0,688.2 1029.0,693.8C1037.0,699.4 1044.9,705.5 1052.9,711.7C1060.9,717.9 1070.6,725.6 1076.8,730.8C1083.0,736.0 1083.8,737.2 1090.0,742.8C1096.2,748.4 1105.9,757.1 1113.9,764.3C1121.9,771.5 1129.8,778.6 1137.8,785.8C1145.8,793.0 1153.7,800.5 1161.7,807.3C1169.7,814.1 1177.6,820.0 1185.6,826.4C1193.6,832.8 1202.3,840.2 1209.5,845.5C1216.7,850.8 1223.4,855.6 1228.6,858.2C1233.8,860.8 1238.8,861.6 1240.6,861.1C1242.4,860.6 1240.3,857.2 1239.5,855.0C1238.7,852.8 1238.4,852.7 1235.8,847.9C1233.2,843.1 1229.0,835.1 1223.8,826.4C1218.6,817.6 1211.1,805.8 1204.7,795.4C1198.3,785.0 1192.0,774.3 1185.6,764.3C1179.2,754.3 1172.5,744.8 1166.5,735.6C1160.5,726.4 1154.7,716.9 1149.7,709.3C1144.7,701.7 1140.0,695.0 1136.6,690.2C1133.2,685.4 1130.8,683.2 1129.4,680.6C1128.0,678.0 1127.6,676.3 1128.2,674.7C1128.8,673.1 1130.6,671.3 1133.0,671.1C1135.4,670.9 1137.8,671.1 1142.6,673.5C1147.4,675.9 1154.5,680.8 1161.7,685.4C1168.9,690.0 1177.6,695.3 1185.6,700.9C1193.6,706.5 1201.5,712.7 1209.5,718.9C1217.5,725.1 1225.4,731.6 1233.4,738.0C1241.4,744.4 1249.3,750.7 1257.3,757.1C1265.3,763.5 1273.2,769.8 1281.2,776.2C1289.2,782.6 1297.1,789.0 1305.1,795.4C1313.1,801.8 1321.0,808.1 1329.0,814.5C1337.0,820.9 1344.9,827.4 1352.9,833.6C1360.9,839.8 1370.8,847.2 1376.8,851.5C1382.8,855.8 1385.6,857.9 1388.8,859.5C1392.0,861.1 1395.0,861.9 1395.9,861.1C1396.9,860.4 1395.3,857.2 1394.5,855.0C1393.7,852.8 1394.2,853.1 1391.2,847.9C1388.2,842.7 1382.4,833.1 1376.8,824.0C1371.2,814.9 1364.1,803.4 1357.7,793.0C1351.3,782.6 1345.0,771.9 1338.6,761.9C1332.2,751.9 1325.4,742.4 1319.4,733.2C1313.4,724.0 1307.5,714.1 1302.7,706.9C1297.9,699.7 1294.0,694.6 1290.8,690.2C1287.6,685.8 1285.0,683.1 1283.6,680.6C1282.2,678.1 1281.8,676.9 1282.4,675.4C1283.0,673.9 1284.6,671.6 1287.2,671.5C1289.8,671.4 1292.9,672.2 1297.9,674.7C1302.9,677.2 1309.9,681.8 1317.1,686.6C1324.3,691.4 1333.0,697.5 1341.0,703.3C1349.0,709.1 1355.3,714.1 1364.9,721.3C1374.5,728.5 1391.3,740.8 1398.8,746.4C1406.3,752.0 1408.1,753.6 1410.0,755.0"/></g><g stroke="#000" stroke-opacity="0.07" stroke-width="1.3">
<path d="M749,100V974"/>
<path d="M965.7,100V974"/>
<path d="M1182.3,100V974"/>
<path d="M532,318.5H1399"/>
<path d="M532,537H1399"/>
<path d="M532,755.5H1399"/>
</g>
<path d="M532.5,100V974 M532,973.5H1399" stroke="#262626" stroke-opacity="0.3" stroke-width="1" fill="none"/>
<path d="M532.5,808V973.5H1399 M1147,100.5H1398.5V292" stroke="#8a0a0a" stroke-opacity="0.85" stroke-width="1" fill="none"/>
<g stroke="#262626" stroke-opacity="0.3" stroke-width="1">
<path d="M532,100.5h9"/>
<path d="M532,318.5h9"/>
<path d="M532,537.5h9"/>
<path d="M532,755.5h9"/>
<path d="M749.5,974v-9"/>
<path d="M965.5,974v-9"/>
<path d="M1182.5,974v-9"/>
<path d="M1398.5,974v-9"/>
</g>
<g font-family="Liberation Sans, Arial, sans-serif" font-size="19.4" fill="#262626">
<text x="524.5" y="108.3" text-anchor="end">2.5</text>
<text x="524.5" y="326.8" text-anchor="end">2</text>
<text x="524.5" y="545.3" text-anchor="end">1.5</text>
<text x="524.5" y="763.8" text-anchor="end">1</text>
<text x="524.5" y="982.3" text-anchor="end">0.5</text>
<text x="532" y="1003.2" text-anchor="middle">0.5</text>
<text x="749" y="1003.2" text-anchor="middle">1</text>
<text x="965.5" y="1003.2" text-anchor="middle">1.5</text>
<text x="1182" y="1003.2" text-anchor="middle">2</text>
<text x="1399" y="1003.2" text-anchor="middle">2.5</text>
</g>
<text transform="translate(482.3,538) rotate(-90)" text-anchor="middle" font-family="Liberation Serif, Times New Roman, serif" font-size="22.5" letter-spacing="0.88" fill="#262626">B-C bond distance (Å)</text>
</svg>
<div id="botb" class="abs"></div><div id="botb2" class="abs" style="left:512px;top:1002px;width:67px;height:2px;background:#7a1a8a"></div>
</body></html>
